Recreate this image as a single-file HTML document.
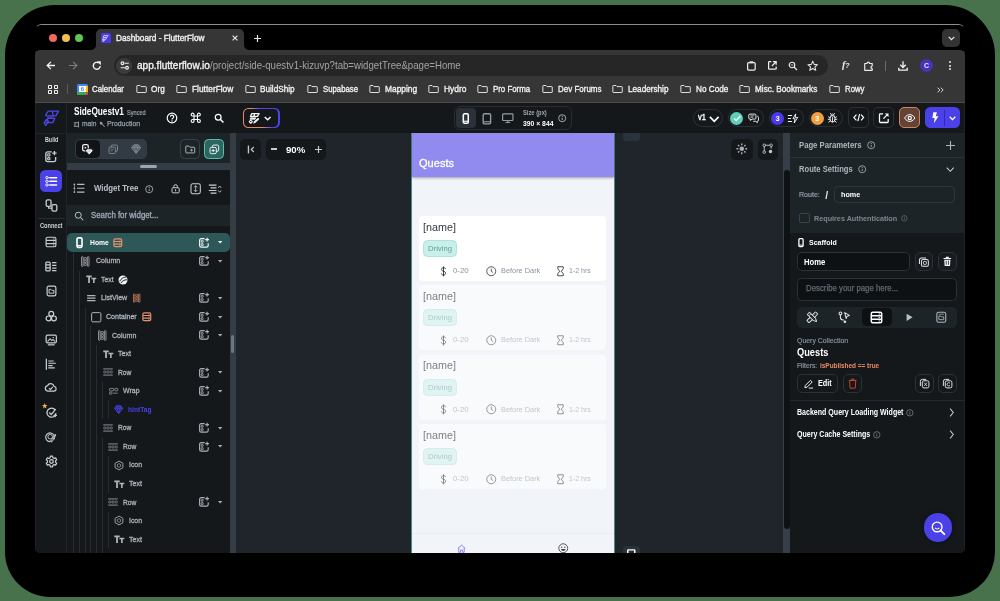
<!DOCTYPE html>
<html><head><meta charset="utf-8"><title>Dashboard - FlutterFlow</title>
<style>
html,body{margin:0;padding:0;background:#48724c}
body{width:1000px;height:601px;overflow:hidden;background:#48724c;position:relative;font-family:"Liberation Sans",sans-serif;}
#sh{position:absolute;left:5px;top:5px;width:990px;height:591.8px;border-radius:50px 50px 45px 45px;background:#000}
#win{position:absolute;left:35.2px;top:24px;width:929.6px;height:529.4px;border-radius:6px 6px 5px 5px;overflow:hidden;background:#14181b}
#pg{position:absolute;left:-35.2px;top:-24px;width:1000px;height:601px;will-change:transform}
.t{position:absolute;white-space:nowrap;transform-origin:0 50%;display:block}
.b{position:absolute;box-sizing:border-box}
.s{position:absolute;overflow:visible}
</style></head><body>
<div id="sh"></div>
<div id="win"><div id="pg">
<div class="b" style="left:35.00px;top:24.00px;width:930.00px;height:26.50px;background:#000;"></div>
<div class="b" style="left:35.20px;top:50.00px;width:929.60px;height:52.00px;background:#363636;border-radius:5px 5px 0 0;"></div>
<div class="b" style="left:96.00px;top:29.00px;width:148.30px;height:23.00px;background:#363636;border-radius:5px 5px 0 0;"></div>
<svg class="s" style="left:91px;top:45px" width="5" height="5"><path d="M5 0 V5 H0 A5 5 0 0 0 5 0Z" fill="#363636"/></svg>
<svg class="s" style="left:244.3px;top:45px" width="5" height="5"><path d="M0 0 V5 H5 A5 5 0 0 1 0 0Z" fill="#363636"/></svg>
<div class="b" style="left:35.2px;top:24.2px;width:929.6px;height:14px;box-sizing:border-box;border-top:1px solid #8c8c8c;border-left:1px solid transparent;border-right:1px solid transparent;border-radius:6px 6px 0 0"></div>
<div class="b" style="left:49.35px;top:33.95px;width:8.10px;height:8.10px;background:#ed6a5e;border-radius:5px;"></div>
<div class="b" style="left:62.35px;top:33.95px;width:8.10px;height:8.10px;background:#f4be4f;border-radius:5px;"></div>
<div class="b" style="left:75.15px;top:33.95px;width:8.10px;height:8.10px;background:#61c554;border-radius:5px;"></div>
<div class="b" style="left:100.50px;top:33.00px;width:10.20px;height:10.20px;background:#4b39ef;border-radius:1.5px;"></div>
<svg class="s" style="left:101.40px;top:33.60px;" width="8.6" height="8.6" viewBox="0 0 24 24"><path d="M8 4 H20 L17 9 H6 Z M6 10.5 H16 L13 15.5 H4.5 Z M4.5 17 H10 L6.5 21.5 Z" fill="none" stroke="#ece9ff" stroke-width="2"/></svg>
<span class="t" style="left:116.00px;top:33.04px;font-size:8.6px;line-height:10.32px;color:#f1f1f1;transform:scaleX(0.9594);-webkit-text-stroke:.35px #f1f1f1;">Dashboard - FlutterFlow</span>
<svg class="s" style="left:231.50px;top:35.00px;" width="6" height="6" viewBox="0 0 10 10"><path d="M1 1 L9 9 M9 1 L1 9" stroke="#e8e8e8" stroke-width="1.9" fill="none"/></svg>
<svg class="s" style="left:254.10px;top:34.50px;" width="7" height="7" viewBox="0 0 10 10"><path d="M5 0 V10 M0 5 H10" stroke="#e8e8e8" stroke-width="1.7" fill="none"/></svg>
<div class="b" style="left:942.00px;top:28.60px;width:18.00px;height:18.40px;background:#333;border-radius:5px;"></div>
<svg class="s" style="left:947.50px;top:35.70px;" width="7" height="4.6" viewBox="0 0 10 6"><path d="M1 1 L5 5 L9 1" stroke="#e8e8e8" stroke-width="1.8" fill="none"/></svg>
<svg class="s" style="left:45.90px;top:61.20px;" width="9" height="9" viewBox="0 0 20 20"><path d="M11 2 L2.6 10 L11 18 M3 10 H20" stroke="#f2f2f2" stroke-width="2.9" fill="none"/></svg>
<svg class="s" style="left:68.50px;top:61.20px;" width="9" height="9" viewBox="0 0 20 20"><path d="M9 2 L17.4 10 L9 18 M17 10 H0" stroke="#7d7d7d" stroke-width="2.7" fill="none"/></svg>
<svg class="s" style="left:91.85px;top:60.75px;" width="9.5" height="9.5" viewBox="0 0 20 20"><path d="M17.3 10.5 A7.3 7.3 0 1 1 14.3 4.2" stroke="#f2f2f2" stroke-width="2.9" fill="none"/><path d="M10.5 0.6 H18.6 V8.8 Z" fill="#f2f2f2"/></svg>
<div class="b" style="left:114.00px;top:55.20px;width:713.50px;height:20.60px;background:#262626;border-radius:11px;"></div>
<div class="b" style="left:116.20px;top:57.70px;width:16.20px;height:16.20px;background:#3b3b3b;border-radius:9px;"></div>
<svg class="s" style="left:119.55px;top:61.30px;" width="9.5" height="9" viewBox="0 0 20 20"><path d="M9.5 5 H19 M1 15 H10.5" stroke="#ececec" stroke-width="2.7" fill="none"/><circle cx="5" cy="5" r="3" stroke="#ececec" stroke-width="2.7" fill="none"/><circle cx="15" cy="15" r="3" stroke="#ececec" stroke-width="2.7" fill="none"/></svg>
<span class="t" style="left:137.40px;top:59.24px;font-size:10.6px;line-height:12.72px;color:#f3f3f3;transform:scaleX(0.9504);-webkit-text-stroke:.35px #f3f3f3;">app.flutterflow.io</span>
<span class="t" style="left:210.20px;top:59.24px;font-size:10.6px;line-height:12.72px;color:#a3a3a3;transform:scaleX(0.9108);">/project/side-questv1-kizuvp?tab=widgetTree&amp;page=Home</span>
<svg class="s" style="left:745.60px;top:59.75px;" width="10.8" height="11.5" viewBox="0 0 20 20"><rect x="3" y="4" width="14" height="14" rx="2" stroke="#ebebeb" stroke-width="2.3" fill="none"/><rect x="6.5" y="1.5" width="7" height="4" rx="1" fill="#e4e4e4"/></svg>
<svg class="s" style="left:766.60px;top:60.10px;" width="10.8" height="10.8" viewBox="0 0 20 20"><path d="M8 3 H4 a1 1 0 0 0 -1 1 V16 a1 1 0 0 0 1 1 H16 a1 1 0 0 0 1 -1 V12" stroke="#ebebeb" stroke-width="2.3" fill="none"/><path d="M11 3 H17 V9 M17 3 L9 11" stroke="#ebebeb" stroke-width="2.3" fill="none"/></svg>
<svg class="s" style="left:787.50px;top:60.70px;" width="10" height="10" viewBox="0 0 20 20"><circle cx="8" cy="8" r="5.5" stroke="#ebebeb" stroke-width="2.3" fill="none"/><path d="M12 12 L18 18" stroke="#e4e4e4" stroke-width="2.4"/><path d="M5.5 8 H10.5" stroke="#e4e4e4" stroke-width="1.6"/></svg>
<svg class="s" style="left:807.35px;top:59.55px;" width="11.5" height="11.5" viewBox="0 0 20 20"><path d="M10 2 L12.4 7.6 L18.4 8.1 L13.8 12 L15.2 17.9 L10 14.7 L4.8 17.9 L6.2 12 L1.6 8.1 L7.6 7.6 Z" stroke="#e4e4e4" stroke-width="1.8" fill="none" stroke-linejoin="round"/></svg>
<span class="t" style="left:842.00px;top:59.00px;font-size:10.5px;line-height:12.60px;color:#eaeaea;font-weight:700;font-style:italic;font-family:'Liberation Serif',serif;">f</span>
<span class="t" style="left:845.30px;top:62.10px;font-size:7px;line-height:8.40px;color:#eaeaea;font-weight:700;font-style:italic;">?</span>
<svg class="s" style="left:862.95px;top:59.75px;" width="11.5" height="11.5" viewBox="0 0 20 20"><path d="M3 6 H7 a2.2 2.2 0 1 1 4.4 0 H16 V10.5 a2.2 2.2 0 1 0 0 4.4 V18 H3 Z" stroke="#ececec" stroke-width="2" fill="none" stroke-linejoin="round"/></svg>
<div class="b" style="left:885.00px;top:61.00px;width:1.00px;height:9.50px;background:#6b6b6b;"></div>
<svg class="s" style="left:897.30px;top:59.50px;" width="12" height="12" viewBox="0 0 20 20"><path d="M10 2 V12 M5.5 8 L10 12.5 L14.5 8" stroke="#f0f0f0" stroke-width="2.2" fill="none"/><path d="M3 13 V17 H17 V13" stroke="#f0f0f0" stroke-width="2.2" fill="none"/></svg>
<div class="b" style="left:919.50px;top:58.80px;width:13.70px;height:13.70px;background:#4634b5;border-radius:7px;"></div>
<span class="t" style="left:923.90px;top:61.60px;font-size:7px;line-height:8.40px;color:#e8e6ff;font-weight:700;">C</span>
<div class="b" style="left:948.50px;top:60.90px;width:2.10px;height:2.00px;background:#ececec;border-radius:1px;"></div>
<div class="b" style="left:948.50px;top:64.50px;width:2.10px;height:2.00px;background:#ececec;border-radius:1px;"></div>
<div class="b" style="left:948.50px;top:68.10px;width:2.10px;height:2.00px;background:#ececec;border-radius:1px;"></div>
<div class="b" style="left:48.00px;top:84.50px;width:4.30px;height:4.30px;border:1.1px solid #f0f0f0;border-radius:0.8px;"></div>
<div class="b" style="left:48.00px;top:89.90px;width:4.30px;height:4.30px;border:1.1px solid #f0f0f0;border-radius:0.8px;"></div>
<div class="b" style="left:53.80px;top:84.50px;width:4.30px;height:4.30px;border:1.1px solid #f0f0f0;border-radius:0.8px;"></div>
<div class="b" style="left:53.80px;top:89.90px;width:4.30px;height:4.30px;border:1.1px solid #f0f0f0;border-radius:0.8px;"></div>
<div class="b" style="left:67.00px;top:84.20px;width:1.00px;height:10.20px;background:#5a5a5a;"></div>
<div class="b" style="left:77.30px;top:84.20px;width:10.30px;height:10.40px;background:#4285f4;border-radius:1.5px;"></div>
<div class="b" style="left:79.30px;top:86.20px;width:6.30px;height:6.40px;background:#fff;"></div>
<div class="b" style="left:77.30px;top:92.40px;width:8.30px;height:2.20px;background:#34a853;border-radius:0 0 0 1.5px;"></div>
<div class="b" style="left:85.60px;top:86.20px;width:2.00px;height:6.40px;background:#fbbc04;"></div>
<div class="b" style="left:85.60px;top:92.40px;width:2.00px;height:2.20px;background:#ea4335;border-radius:0 0 1.5px 0;"></div>
<span class="t" style="left:80.80px;top:85.90px;font-size:6px;line-height:7.20px;color:#4285f4;font-weight:700;">6</span>
<span class="t" style="left:91.70px;top:84.02px;font-size:9.3px;line-height:11.16px;color:#f2f2f2;transform:scaleX(0.8452);-webkit-text-stroke:.35px #f2f2f2;">Calendar</span>
<span class="t" style="left:151.30px;top:84.02px;font-size:9.3px;line-height:11.16px;color:#f2f2f2;transform:scaleX(0.8837);-webkit-text-stroke:.35px #f2f2f2;">Org</span>
<svg class="s" style="left:135.60px;top:85.20px;" width="11" height="8" viewBox="0 0 21 16"><path d="M1.2 2 a1 1 0 0 1 1 -1 H7.5 L9.5 3.2 H19 a1 1 0 0 1 1 1 V14 a1 1 0 0 1 -1 1 H2.2 a1 1 0 0 1 -1 -1 Z" stroke="#e9e9e9" stroke-width="1.9" fill="none" stroke-linejoin="round"/></svg>
<span class="t" style="left:192.00px;top:84.02px;font-size:9.3px;line-height:11.16px;color:#f2f2f2;transform:scaleX(0.8980);-webkit-text-stroke:.35px #f2f2f2;">FlutterFlow</span>
<svg class="s" style="left:176.10px;top:85.20px;" width="11" height="8" viewBox="0 0 21 16"><path d="M1.2 2 a1 1 0 0 1 1 -1 H7.5 L9.5 3.2 H19 a1 1 0 0 1 1 1 V14 a1 1 0 0 1 -1 1 H2.2 a1 1 0 0 1 -1 -1 Z" stroke="#e9e9e9" stroke-width="1.9" fill="none" stroke-linejoin="round"/></svg>
<span class="t" style="left:260.30px;top:84.02px;font-size:9.3px;line-height:11.16px;color:#f2f2f2;transform:scaleX(0.8831);-webkit-text-stroke:.35px #f2f2f2;">BuildShip</span>
<svg class="s" style="left:244.50px;top:85.20px;" width="11" height="8" viewBox="0 0 21 16"><path d="M1.2 2 a1 1 0 0 1 1 -1 H7.5 L9.5 3.2 H19 a1 1 0 0 1 1 1 V14 a1 1 0 0 1 -1 1 H2.2 a1 1 0 0 1 -1 -1 Z" stroke="#e9e9e9" stroke-width="1.9" fill="none" stroke-linejoin="round"/></svg>
<span class="t" style="left:323.00px;top:84.02px;font-size:9.3px;line-height:11.16px;color:#f2f2f2;transform:scaleX(0.8356);-webkit-text-stroke:.35px #f2f2f2;">Supabase</span>
<svg class="s" style="left:307.10px;top:85.20px;" width="11" height="8" viewBox="0 0 21 16"><path d="M1.2 2 a1 1 0 0 1 1 -1 H7.5 L9.5 3.2 H19 a1 1 0 0 1 1 1 V14 a1 1 0 0 1 -1 1 H2.2 a1 1 0 0 1 -1 -1 Z" stroke="#e9e9e9" stroke-width="1.9" fill="none" stroke-linejoin="round"/></svg>
<span class="t" style="left:385.30px;top:84.02px;font-size:9.3px;line-height:11.16px;color:#f2f2f2;transform:scaleX(0.9026);-webkit-text-stroke:.35px #f2f2f2;">Mapping</span>
<svg class="s" style="left:369.30px;top:85.20px;" width="11" height="8" viewBox="0 0 21 16"><path d="M1.2 2 a1 1 0 0 1 1 -1 H7.5 L9.5 3.2 H19 a1 1 0 0 1 1 1 V14 a1 1 0 0 1 -1 1 H2.2 a1 1 0 0 1 -1 -1 Z" stroke="#e9e9e9" stroke-width="1.9" fill="none" stroke-linejoin="round"/></svg>
<span class="t" style="left:444.00px;top:84.02px;font-size:9.3px;line-height:11.16px;color:#f2f2f2;transform:scaleX(0.9070);-webkit-text-stroke:.35px #f2f2f2;">Hydro</span>
<svg class="s" style="left:428.10px;top:85.20px;" width="11" height="8" viewBox="0 0 21 16"><path d="M1.2 2 a1 1 0 0 1 1 -1 H7.5 L9.5 3.2 H19 a1 1 0 0 1 1 1 V14 a1 1 0 0 1 -1 1 H2.2 a1 1 0 0 1 -1 -1 Z" stroke="#e9e9e9" stroke-width="1.9" fill="none" stroke-linejoin="round"/></svg>
<span class="t" style="left:493.20px;top:84.02px;font-size:9.3px;line-height:11.16px;color:#f2f2f2;transform:scaleX(0.8446);-webkit-text-stroke:.35px #f2f2f2;">Pro Forma</span>
<svg class="s" style="left:477.30px;top:85.20px;" width="11" height="8" viewBox="0 0 21 16"><path d="M1.2 2 a1 1 0 0 1 1 -1 H7.5 L9.5 3.2 H19 a1 1 0 0 1 1 1 V14 a1 1 0 0 1 -1 1 H2.2 a1 1 0 0 1 -1 -1 Z" stroke="#e9e9e9" stroke-width="1.9" fill="none" stroke-linejoin="round"/></svg>
<span class="t" style="left:557.50px;top:84.02px;font-size:9.3px;line-height:11.16px;color:#f2f2f2;transform:scaleX(0.8590);-webkit-text-stroke:.35px #f2f2f2;">Dev Forums</span>
<svg class="s" style="left:541.60px;top:85.20px;" width="11" height="8" viewBox="0 0 21 16"><path d="M1.2 2 a1 1 0 0 1 1 -1 H7.5 L9.5 3.2 H19 a1 1 0 0 1 1 1 V14 a1 1 0 0 1 -1 1 H2.2 a1 1 0 0 1 -1 -1 Z" stroke="#e9e9e9" stroke-width="1.9" fill="none" stroke-linejoin="round"/></svg>
<span class="t" style="left:628.00px;top:84.02px;font-size:9.3px;line-height:11.16px;color:#f2f2f2;transform:scaleX(0.8801);-webkit-text-stroke:.35px #f2f2f2;">Leadership</span>
<svg class="s" style="left:612.10px;top:85.20px;" width="11" height="8" viewBox="0 0 21 16"><path d="M1.2 2 a1 1 0 0 1 1 -1 H7.5 L9.5 3.2 H19 a1 1 0 0 1 1 1 V14 a1 1 0 0 1 -1 1 H2.2 a1 1 0 0 1 -1 -1 Z" stroke="#e9e9e9" stroke-width="1.9" fill="none" stroke-linejoin="round"/></svg>
<span class="t" style="left:695.70px;top:84.02px;font-size:9.3px;line-height:11.16px;color:#f2f2f2;transform:scaleX(0.8800);-webkit-text-stroke:.35px #f2f2f2;">No Code</span>
<svg class="s" style="left:679.80px;top:85.20px;" width="11" height="8" viewBox="0 0 21 16"><path d="M1.2 2 a1 1 0 0 1 1 -1 H7.5 L9.5 3.2 H19 a1 1 0 0 1 1 1 V14 a1 1 0 0 1 -1 1 H2.2 a1 1 0 0 1 -1 -1 Z" stroke="#e9e9e9" stroke-width="1.9" fill="none" stroke-linejoin="round"/></svg>
<span class="t" style="left:755.00px;top:84.02px;font-size:9.3px;line-height:11.16px;color:#f2f2f2;transform:scaleX(0.8800);-webkit-text-stroke:.35px #f2f2f2;">Misc. Bookmarks</span>
<svg class="s" style="left:739.10px;top:85.20px;" width="11" height="8" viewBox="0 0 21 16"><path d="M1.2 2 a1 1 0 0 1 1 -1 H7.5 L9.5 3.2 H19 a1 1 0 0 1 1 1 V14 a1 1 0 0 1 -1 1 H2.2 a1 1 0 0 1 -1 -1 Z" stroke="#e9e9e9" stroke-width="1.9" fill="none" stroke-linejoin="round"/></svg>
<span class="t" style="left:844.80px;top:84.02px;font-size:9.3px;line-height:11.16px;color:#f2f2f2;transform:scaleX(0.8385);-webkit-text-stroke:.35px #f2f2f2;">Rowy</span>
<svg class="s" style="left:828.80px;top:85.20px;" width="11" height="8" viewBox="0 0 21 16"><path d="M1.2 2 a1 1 0 0 1 1 -1 H7.5 L9.5 3.2 H19 a1 1 0 0 1 1 1 V14 a1 1 0 0 1 -1 1 H2.2 a1 1 0 0 1 -1 -1 Z" stroke="#e9e9e9" stroke-width="1.9" fill="none" stroke-linejoin="round"/></svg>
<svg class="s" style="left:937.00px;top:86.50px;" width="7" height="6" viewBox="0 0 12 10"><path d="M1 1 L5 5 L1 9 M6.5 1 L10.5 5 L6.5 9" stroke="#ececec" stroke-width="1.5" fill="none"/></svg>
<div class="b" style="left:35.00px;top:101.60px;width:930.00px;height:1.20px;background:#4c4c4c;"></div>
<div class="b" style="left:35.00px;top:102.80px;width:930.00px;height:451.20px;background:#14181b;"></div>
<div class="b" style="left:35.20px;top:102.80px;width:1.10px;height:451.20px;background:#1e2125;"></div>
<div class="b" style="left:963.70px;top:102.80px;width:1.10px;height:451.20px;background:#1e2125;"></div>
<div class="b" style="left:66.30px;top:102.80px;width:0.70px;height:450.20px;background:#1f252a;"></div>
<div class="b" style="left:36.00px;top:132.80px;width:31.00px;height:0.70px;background:#1f252a;"></div>
<svg class="s" style="left:38px;top:104px" width="30" height="30" viewBox="0 0 30 30"><path d="M10.2 7.1 H20.6 L17.8 11.9 H8.1 L7.6 11.2 Z M14.2 7.1 L15.2 11.9" fill="none" stroke="#4b45e6" stroke-width="1.35" stroke-linejoin="round"/><path d="M9.4 12.3 H15.8 V13.7 H9.4 Z" fill="#3f39c8"/><path d="M9.8 14.3 H16.9 L14.7 18.6 H11 L9.2 16.2 Z" fill="none" stroke="#4b45e6" stroke-width="1.35" stroke-linejoin="round"/><path d="M8.4 15.4 L10.7 17.7 L7.7 21.5 L6.1 18.9 Z M7 18 L9.4 18.6" fill="none" stroke="#4b45e6" stroke-width="1.25" stroke-linejoin="round"/></svg>
<span class="t" style="left:74.00px;top:106.28px;font-size:10.2px;line-height:12.24px;color:#fff;font-weight:700;transform:scaleX(0.8092);">SideQuestv1</span>
<span class="t" style="left:127.30px;top:109.34px;font-size:6.6px;line-height:7.92px;color:#95a1ac;transform:scaleX(0.8495);-webkit-text-stroke:.2px #95a1ac;">Synced</span>
<svg class="s" style="left:73.45px;top:120.50px;" width="7.5" height="7" viewBox="0 0 12 12"><path d="M1 3 H9 M1 9 H9 M9 1 V11 M3 3 V9" stroke="#95a1ac" stroke-width="1.6" fill="none"/></svg>
<span class="t" style="left:82.30px;top:119.32px;font-size:7.8px;line-height:9.36px;color:#95a1ac;transform:scaleX(0.8517);-webkit-text-stroke:.25px #95a1ac;">main</span>
<svg class="s" style="left:98.55px;top:120.95px;" width="6.5" height="6.5" viewBox="0 0 12 12"><path d="M2 2 a3 3 0 0 1 4.5 3.5 L11 10 L9.5 11 L5.5 6.6 A3 3 0 0 1 2 2Z" fill="#95a1ac"/></svg>
<span class="t" style="left:106.70px;top:119.32px;font-size:7.8px;line-height:9.36px;color:#95a1ac;transform:scaleX(0.8876);-webkit-text-stroke:.25px #95a1ac;">Production</span>
<svg class="s" style="left:166.00px;top:112.00px;" width="12" height="12" viewBox="0 0 20 20"><circle cx="10" cy="10" r="8" stroke="#fff" stroke-width="2" fill="none"/><path d="M7.4 8 a2.7 2.7 0 1 1 3.9 2.4 c-.9.5-1.3 1-1.3 2" stroke="#fff" stroke-width="2" fill="none"/><circle cx="10" cy="14.8" r="1.2" fill="#fff"/></svg>
<svg class="s" style="left:190.05px;top:112.25px;" width="11.5" height="11.5" viewBox="0 0 20 20"><path d="M7 7 H13 V13 H7 Z M7 7 V4.5 A2.5 2.5 0 1 0 4.5 7 H7 M13 7 V4.5 A2.5 2.5 0 1 1 15.5 7 H13 M7 13 V15.5 A2.5 2.5 0 1 1 4.5 13 H7 M13 13 V15.5 A2.5 2.5 0 1 0 15.5 13 H13" stroke="#fff" stroke-width="2" fill="none"/></svg>
<svg class="s" style="left:213.95px;top:113.15px;" width="10.5" height="10.5" viewBox="0 0 20 20"><circle cx="8" cy="8" r="5.5" stroke="#fff" stroke-width="2.4" fill="none"/><path d="M12 12 L18 18" stroke="#fff" stroke-width="2.8"/></svg>
<div class="b" style="left:242.6px;top:107.9px;width:37.1px;height:20.1px;border-radius:5.5px;background:linear-gradient(59deg,#e8895f 0%,#e8895f 40%,#8f66c9 50%,#4a45ea 60%,#4a45ea 100%);"></div>
<div class="b" style="left:243.80px;top:109.10px;width:34.70px;height:17.70px;background:#14181b;border-radius:4.4px;"></div>
<svg class="s" style="left:248.00px;top:111.90px;" width="12.2" height="12.2" viewBox="0 0 20 20"><path d="M6.2 2.6 H18.2 L15.6 7.2 H4 Z M11 2.6 L9.4 7.2" fill="none" stroke="#f4f4f4" stroke-width="2.1" stroke-linejoin="round"/><path d="M4.2 9.6 H12.8 L11.6 12 H3.4 Z" fill="#f4f4f4" stroke="#f4f4f4" stroke-width="1.2" stroke-linejoin="round"/><path d="M4.6 13.4 L7.2 15.8 L4.6 18.6 L2 15.8 Z" fill="none" stroke="#f4f4f4" stroke-width="1.8" stroke-linejoin="round"/><path d="M10.6 16.8 L16.6 11.4" stroke="#f4f4f4" stroke-width="3.2" stroke-linecap="round"/><path d="M9.6 18.2 L11.2 16.4" stroke="#f4f4f4" stroke-width="1.6" stroke-linecap="round"/></svg>
<svg class="s" style="left:263.85px;top:115.50px;" width="7.3" height="4.8" viewBox="0 0 10 6"><path d="M1 1 L5 5 L9 1" stroke="#fff" stroke-width="1.9" fill="none"/></svg>
<div class="b" style="left:453.70px;top:105.60px;width:118.80px;height:24.40px;border:1px solid #272d33;border-radius:6px;"></div>
<div class="b" style="left:455.50px;top:108.00px;width:20.80px;height:20.00px;background:#2a3138;border-radius:4px;"></div>
<svg class="s" style="left:462.10px;top:112.70px;" width="7.6" height="11" viewBox="0 0 12 20"><rect x="1.5" y="1.5" width="9" height="17" rx="2.2" stroke="#fff" stroke-width="2.8" fill="none"/><path d="M2 15 H10" stroke="#fff" stroke-width="2"/></svg>
<svg class="s" style="left:481.90px;top:112.70px;" width="9.8" height="11.6" viewBox="0 0 14 18"><rect x="1.2" y="1.2" width="11.6" height="15.6" rx="2.2" stroke="#939da7" stroke-width="2.1" fill="none"/><path d="M2 13.6 H12" stroke="#939da7" stroke-width="1.7"/></svg>
<svg class="s" style="left:501.70px;top:113.20px;" width="11.6" height="10.4" viewBox="0 0 20 17"><rect x="1.1" y="1.1" width="17.8" height="11.4" rx="1.3" stroke="#939da7" stroke-width="2" fill="none"/><path d="M6 16 H14 M10 12.5 V16" stroke="#939da7" stroke-width="1.8"/></svg>
<span class="t" style="left:522.50px;top:109.42px;font-size:6.3px;line-height:7.56px;color:#9ca6b0;font-weight:700;transform:scaleX(0.9188);">Size (px)</span>
<span class="t" style="left:522.50px;top:118.84px;font-size:7.6px;line-height:9.12px;color:#fff;font-weight:700;transform:scaleX(0.8965);">390 × 844</span>
<svg class="s" style="left:558.40px;top:113.80px;" width="8.4" height="8.4" viewBox="0 0 20 20"><circle cx="10" cy="10" r="8.4" stroke="#c3c9cf" stroke-width="1.9" fill="none"/><path d="M10 9 V14.5" stroke="#c3c9cf" stroke-width="2"/><circle cx="10" cy="6" r="1.3" fill="#c3c9cf"/></svg>
<div class="b" style="left:693.00px;top:108.70px;width:30.00px;height:18.50px;border:1px solid #2a3037;border-radius:10px;"></div>
<span class="t" style="left:697.60px;top:112.40px;font-size:9px;line-height:10.80px;color:#fff;transform:scaleX(0.8311);-webkit-text-stroke:.35px #fff;">v1</span>
<svg class="s" style="left:709.05px;top:115.50px;" width="10.5" height="6.2" viewBox="0 0 12 7"><path d="M1 1 L6 6 L11 1" stroke="#fff" stroke-width="1.9" fill="none"/></svg>
<div class="b" style="left:727.60px;top:108.70px;width:36.20px;height:18.50px;border:1px solid #2a3037;border-radius:10px;"></div>
<div class="b" style="left:730.20px;top:111.50px;width:13.00px;height:13.00px;background:#5fcfba;border-radius:7px;"></div>
<svg class="s" style="left:732.65px;top:114.80px;" width="8.5" height="7" viewBox="0 0 12 10"><path d="M1.5 5 L4.5 8 L10.5 1.5" stroke="#fff" stroke-width="2" fill="none"/></svg>
<svg class="s" style="left:747.65px;top:112.95px;" width="11.5" height="10.5" viewBox="0 0 20 19"><path d="M3 2 H12 a2 2 0 0 1 2 2 V9 a2 2 0 0 1 -2 2 H7 L4 13.5 V11 H3 a2 2 0 0 1 -2 -2 V4 a2 2 0 0 1 2 -2Z" stroke="#fff" stroke-width="1.6" fill="none"/><path d="M16.5 6 a2 2 0 0 1 2 2 V13 a2 2 0 0 1 -2 2 V17.5 L13.5 15 H9" stroke="#fff" stroke-width="1.6" fill="none"/><path d="M4 5.2 H11 M4 7.8 H9" stroke="#fff" stroke-width="1.2"/></svg>
<div class="b" style="left:768.60px;top:108.70px;width:35.20px;height:18.50px;border:1px solid #2a3037;border-radius:10px;"></div>
<div class="b" style="left:771.00px;top:111.50px;width:13.00px;height:13.00px;background:#4b39ef;border-radius:7px;"></div>
<span class="t" style="left:775.40px;top:113.54px;font-size:7.6px;line-height:9.12px;color:#fff;font-weight:700;">3</span>
<svg class="s" style="left:787.20px;top:112.80px;" width="12" height="10.8" viewBox="0 0 19 18"><path d="M1 4 H8 M1 9 H6 M1 14 H8" stroke="#fff" stroke-width="1.7" fill="none"/><path d="M14 1.5 L9.5 9.5 H13 L11.5 16.5 L17.5 7.5 H13.5 Z" stroke="#fff" stroke-width="1.5" fill="none" stroke-linejoin="round"/></svg>
<div class="b" style="left:808.60px;top:108.70px;width:34.60px;height:18.50px;border:1px solid #2a3037;border-radius:10px;"></div>
<div class="b" style="left:810.50px;top:111.50px;width:13.00px;height:13.00px;background:#f2a03d;border-radius:7px;"></div>
<span class="t" style="left:814.90px;top:113.54px;font-size:7.6px;line-height:9.12px;color:#fff;font-weight:700;">3</span>
<svg class="s" style="left:827.00px;top:112.20px;" width="11" height="12" viewBox="0 0 20 21"><ellipse cx="10" cy="12" rx="4.6" ry="6" stroke="#fff" stroke-width="1.8" fill="none"/><path d="M7 6.5 a3 3 0 0 1 6 0 M10 8 V18 M5.4 10 L2 8 M5.4 13 H1.5 M5.6 16 L2.5 18.5 M14.6 10 L18 8 M14.6 13 H18.5 M14.4 16 L17.5 18.5 M7.5 3.8 L6 1.5 M12.5 3.8 L14 1.5" stroke="#fff" stroke-width="1.5" fill="none"/></svg>
<div class="b" style="left:848.00px;top:107.30px;width:20.80px;height:21.20px;border:1px solid #2a3037;border-radius:5px;"></div>
<svg class="s" style="left:852.65px;top:113.40px;" width="11.5" height="9.2" viewBox="0 0 20 14"><path d="M6 2 L1.5 7 L6 12 M14 2 L18.5 7 L14 12 M11.5 1 L8.5 13" stroke="#fff" stroke-width="2" fill="none"/></svg>
<div class="b" style="left:873.00px;top:107.30px;width:21.20px;height:21.20px;border:1px solid #2a3037;border-radius:5px;"></div>
<svg class="s" style="left:877.80px;top:112.00px;" width="12" height="12" viewBox="0 0 20 20"><path d="M8.5 3 H4 a1.5 1.5 0 0 0 -1.5 1.5 V16 a1.5 1.5 0 0 0 1.5 1.5 H15.5 a1.5 1.5 0 0 0 1.5 -1.5 V11.5" stroke="#fff" stroke-width="2.1" fill="none"/><path d="M11.5 2.5 H17.5 V8.5 Z" fill="#fff"/><path d="M16 4 L9 11" stroke="#fff" stroke-width="2.2"/></svg>
<div class="b" style="left:898.70px;top:107.30px;width:21.30px;height:21.20px;background:#634335;border:1.6px solid #cf835f;border-radius:5px;"></div>
<svg class="s" style="left:903.55px;top:114.00px;" width="11.5" height="8" viewBox="0 0 20 14"><path d="M1 7 C4 2 8 1 10 1 S16 2 19 7 C16 12 12 13 10 13 S4 12 1 7Z" stroke="#fff" stroke-width="1.7" fill="none"/><circle cx="10" cy="7" r="2.8" stroke="#fff" stroke-width="2" fill="none"/></svg>
<div class="b" style="left:924.50px;top:107.30px;width:35.10px;height:21.20px;background:#4a41e8;border-radius:5.5px;"></div>
<div class="b" style="left:944.20px;top:109.50px;width:0.70px;height:16.80px;background:#3425c2;"></div>
<svg class="s" style="left:931.05px;top:112.25px;" width="8.5" height="11.5" viewBox="0 0 12 18"><path d="M8.5 0.5 H3 L1.5 9.5 H5 L4 17.5 L11 6.5 H7 Z" fill="#fff"/></svg>
<svg class="s" style="left:948.50px;top:116.40px;" width="7" height="4.4" viewBox="0 0 10 6"><path d="M1 1 L5 5 L9 1" stroke="#fff" stroke-width="1.8" fill="none"/></svg>
<span class="t" style="left:44.60px;top:136.16px;font-size:6.4px;line-height:7.68px;color:#cfd4d9;font-weight:700;transform:scaleX(0.8377);">Build</span>
<svg class="s" style="left:44.45px;top:150.25px;" width="13.5" height="13.5" viewBox="0 0 22 22"><path d="M12.5 3 H6 a3 3 0 0 0 -3 3 V16 a3 3 0 0 0 3 3 H16 a3 3 0 0 0 3 -3 V11.5" stroke="#c6cdd4" stroke-width="2.18" fill="none"/><rect x="6" y="6.2" width="3.6" height="3.6" rx=".8" stroke="#c6cdd4" stroke-width="1.72" fill="none"/><rect x="6" y="12.4" width="3.6" height="3.6" rx=".8" stroke="#c6cdd4" stroke-width="1.72" fill="none"/><path d="M17 1.5 V8.5 M13.5 5 H20.5" stroke="#c6cdd4" stroke-width="2.18"/></svg>
<div class="b" style="left:39.80px;top:169.80px;width:22.50px;height:22.60px;background:#4a41e8;border-radius:5.5px;"></div>
<svg class="s" style="left:45.00px;top:175.80px;" width="12.6" height="10.6" viewBox="0 0 21 18"><path d="M8.5 2.8 H19.5 M8.5 9 H19.5 M8.5 15.2 H19.5" stroke="#fff" stroke-width="2.5" stroke-linecap="round"/><circle cx="3" cy="2.8" r="2" stroke="#fff" stroke-width="1.5" fill="none"/><circle cx="3" cy="9" r="2" stroke="#fff" stroke-width="1.5" fill="none"/><circle cx="3" cy="15.2" r="2" stroke="#fff" stroke-width="1.5" fill="none"/><path d="M5 2.8 H8 M5 9 H8 M5 15.2 H8" stroke="#fff" stroke-width="1.2"/></svg>
<svg class="s" style="left:45.00px;top:198.80px;" width="13" height="13" viewBox="0 0 22 22"><rect x="2" y="1.5" width="8.2" height="11" rx="2.4" stroke="#c6cdd4" stroke-width="2.2" fill="none"/><rect x="11.8" y="9.5" width="8.2" height="11" rx="2.4" stroke="#c6cdd4" stroke-width="2.2" fill="none"/><path d="M6 12.5 V15.4 H11.8" stroke="#c6cdd4" stroke-width="1.8" fill="none"/></svg>
<div class="b" style="left:38.00px;top:218.30px;width:27.00px;height:0.70px;background:#262c32;"></div>
<span class="t" style="left:40.00px;top:221.76px;font-size:6.4px;line-height:7.68px;color:#cfd4d9;font-weight:700;transform:scaleX(0.8789);">Connect</span>
<svg class="s" style="left:45.30px;top:236.30px;" width="12" height="12" viewBox="0 0 22 22"><rect x="2" y="2.2" width="18" height="17.6" rx="3" stroke="#c6cdd4" stroke-width="2.1" fill="none"/><path d="M2 8 H20 M2 14 H20" stroke="#c6cdd4" stroke-width="1.9000000000000001"/><path d="M14.5 5.1 H17 M14.5 11 H17 M14.5 16.9 H17" stroke="#c6cdd4" stroke-width="1.5"/></svg>
<svg class="s" style="left:45.30px;top:261.30px;" width="12" height="11" viewBox="0 0 22 20"><rect x="1.5" y="2" width="8" height="16" rx="1.8" stroke="#c6cdd4" stroke-width="2.18" fill="none"/><path d="M1.5 7 H9.5 M1.5 12.5 H9.5 M13 3 H21 M13 8 H21 M13 13 H21 M13 17.5 H21" stroke="#c6cdd4" stroke-width="2.07"/></svg>
<svg class="s" style="left:45.80px;top:284.80px;" width="11" height="12" viewBox="0 0 20 22"><rect x="2" y="2" width="16" height="18" rx="3" stroke="#c6cdd4" stroke-width="2.18" fill="none"/><path d="M5.5 8 H9 L10.5 9.8 H14.5 V15 H5.5 Z" stroke="#c6cdd4" stroke-width="1.72" fill="none"/></svg>
<svg class="s" style="left:45.05px;top:309.80px;" width="12.5" height="12" viewBox="0 0 22 21"><circle cx="11" cy="6.5" r="4.3" stroke="#c6cdd4" stroke-width="2.18" fill="none"/><circle cx="6.3" cy="14.8" r="4.3" stroke="#c6cdd4" stroke-width="2.18" fill="none"/><circle cx="15.7" cy="14.8" r="4.3" stroke="#c6cdd4" stroke-width="2.18" fill="none"/></svg>
<svg class="s" style="left:45.05px;top:333.80px;" width="12.5" height="12" viewBox="0 0 22 21"><rect x="2" y="2" width="18" height="13.5" rx="2.5" stroke="#c6cdd4" stroke-width="2.18" fill="none"/><path d="M4.5 13 L9 8.5 L12 11.5 L14 9.5 L17.5 13" stroke="#c6cdd4" stroke-width="1.84" fill="none"/><circle cx="14.5" cy="6.3" r="1.3" fill="#c6cdd4"/><path d="M5 19 H17" stroke="#c6cdd4" stroke-width="2.18"/></svg>
<svg class="s" style="left:45.30px;top:357.55px;" width="12" height="12.5" viewBox="0 0 22 22"><path d="M2.5 1 V21" stroke="#c6cdd4" stroke-width="2.30"/><path d="M6 5 H16 M6 9.2 H20 M6 13.4 H14 M6 17.6 H18" stroke="#c6cdd4" stroke-width="2.18"/></svg>
<svg class="s" style="left:44.30px;top:382.35px;" width="14" height="10.5" viewBox="0 0 24 18"><path d="M6.5 15.5 a4.6 4.6 0 0 1 -.5 -9.1 a6 6 0 0 1 11.3 1.2 a4 4 0 0 1 .2 7.9 Z" stroke="#c6cdd4" stroke-width="2.18" fill="none" stroke-linejoin="round"/><path d="M8.5 10.5 L11 13 L15 8.5" stroke="#c6cdd4" stroke-width="1.95" fill="none"/></svg>
<svg class="s" style="left:45.10px;top:405.75px;" width="13" height="12.5" viewBox="0 0 22 22"><path d="M17.5 7 A8 8 0 1 0 19 12.5" stroke="#c6cdd4" stroke-width="2.18" fill="none"/><path d="M7 11.5 L10.5 15 L18.5 5.5" stroke="#c6cdd4" stroke-width="2.18" fill="none"/><path d="M17.5 13.5 V20 M14.3 16.7 H20.7" stroke="#c6cdd4" stroke-width="2.07"/></svg>
<svg class="s" style="left:41.85px;top:402.85px;" width="5.5" height="5.5" viewBox="0 0 10 10"><path d="M5 0 L6.3 3.6 L10 3.8 L7.1 6.1 L8.1 9.8 L5 7.7 L1.9 9.8 L2.9 6.1 L0 3.8 L3.7 3.6 Z" fill="#f5b455"/></svg>
<svg class="s" style="left:45.30px;top:430.75px;" width="12" height="12.5" viewBox="0 0 22 22"><path d="M16.5 14.5 A8 8 0 1 0 8 19 c1.5 0 1.8-1.2 1.2-2.2" stroke="#c6cdd4" stroke-width="2.07" fill="none"/><path d="M11.5 17.5 L18.5 5.5 L20 6.5 L13.5 18.5 L11 20 Z" stroke="#c6cdd4" stroke-width="1.61" fill="none"/><circle cx="9.5" cy="10" r="4.2" stroke="#c6cdd4" stroke-width="1.72" fill="none"/></svg>
<svg class="s" style="left:44.80px;top:455.30px;" width="13" height="13" viewBox="0 0 22 21"><path d="M9.2 1.5 H12.8 L13.4 4.2 L15.4 5.3 L18 4.4 L19.8 7.5 L17.8 9.4 V11.6 L19.8 13.5 L18 16.6 L15.4 15.7 L13.4 16.8 L12.8 19.5 H9.2 L8.6 16.8 L6.6 15.7 L4 16.6 L2.2 13.5 L4.2 11.6 V9.4 L2.2 7.5 L4 4.4 L6.6 5.3 L8.6 4.2 Z" stroke="#c6cdd4" stroke-width="2.07" fill="none" stroke-linejoin="round"/><circle cx="11" cy="10.5" r="3" stroke="#c6cdd4" stroke-width="2.07" fill="none"/></svg>
<div class="b" style="left:67.00px;top:133.00px;width:162.50px;height:30.00px;background:#1d2428;"></div>
<div class="b" style="left:67.00px;top:163.20px;width:162.50px;height:6.80px;background:#343c44;"></div>
<div class="b" style="left:140.00px;top:165.00px;width:17.30px;height:3.10px;background:#9ba6b2;border-radius:2px;"></div>
<div class="b" style="left:74.50px;top:138.80px;width:72.80px;height:20.70px;background:#323a43;border-radius:5px;"></div>
<div class="b" style="left:76.20px;top:140.20px;width:23.60px;height:17.80px;background:#111417;border-radius:4.5px;"></div>
<svg class="s" style="left:82.20px;top:143.80px;" width="11.2" height="11.2" viewBox="0 0 21 21"><rect x="1.2" y="1.2" width="10.6" height="11.6" rx="3" stroke="#f2f2f2" stroke-width="2.3" fill="none"/><path d="M5 4.5 V9.5 L8.6 7Z" fill="#f2f2f2"/><path d="M9.4 9 H17.8 L21 12.8 L13.6 20.6 L6.2 12.8 Z" fill="#f2f2f2" stroke="#111417" stroke-width="1.6"/><path d="M10 13.2 H17.2" stroke="#9a9a9a" stroke-width="1"/></svg>
<svg class="s" style="left:107.65px;top:143.95px;" width="10.5" height="10.5" viewBox="0 0 20 20"><rect x="6" y="2" width="12" height="12" rx="2" stroke="#8a949e" stroke-width="1.6" fill="none"/><rect x="2" y="6" width="12" height="12" rx="2" stroke="#8a949e" stroke-width="1.6" fill="#2b333a"/><path d="M5 10 H11 M5 13 H9" stroke="#8a949e" stroke-width="1.3"/></svg>
<svg class="s" style="left:130.90px;top:143.80px;" width="10.2" height="10.2" viewBox="0 0 22 21.5"><path d="M6 1.5 H16 L20.8 7.6 L11 20 L1.2 7.6 Z" stroke="#8a949e" stroke-width="1.7" fill="#8a949e" fill-opacity=".35" stroke-linejoin="round"/><path d="M1.2 7.6 H20.8 M7.6 7.6 L11 19.5 L14.4 7.6 M6 1.5 L7.6 7.6 L11 1.5 L14.4 7.6 L16 1.5" stroke="#8a949e" stroke-width="1.36" fill="none" stroke-linejoin="round"/></svg>
<div class="b" style="left:180.00px;top:139.20px;width:20.00px;height:19.60px;border:1px solid #39424a;border-radius:4.5px;"></div>
<svg class="s" style="left:184.75px;top:144.50px;" width="10.5" height="9" viewBox="0 0 20 16"><path d="M1.5 2.5 a1 1 0 0 1 1 -1 H7.5 L9.5 3.7 H17.5 a1 1 0 0 1 1 1 V13.5 a1 1 0 0 1 -1 1 H2.5 a1 1 0 0 1 -1 -1 Z" stroke="#b9c1c8" stroke-width="1.7" fill="none"/><path d="M12.5 6.8 V11.8 M10 9.3 H15" stroke="#b9c1c8" stroke-width="1.5"/></svg>
<div class="b" style="left:204.30px;top:139.20px;width:20.00px;height:19.60px;background:#2d6660;border:1.2px solid #58bfae;border-radius:4.5px;"></div>
<svg class="s" style="left:208.80px;top:143.50px;" width="11" height="11" viewBox="0 0 21 21"><rect x="6.5" y="2" width="12" height="12" rx="2.5" stroke="#fff" stroke-width="1.7" fill="none"/><rect x="2" y="6.5" width="12" height="12" rx="2.5" stroke="#fff" stroke-width="1.7" fill="#2d6660"/><path d="M8 9.5 V15.5 M5 12.5 H11" stroke="#fff" stroke-width="1.6"/></svg>
<svg class="s" style="left:73.40px;top:183.45px;" width="12" height="10.5" viewBox="0 0 22 19"><path d="M7.5 2.5 H21 M7.5 9.5 H21 M7.5 16.5 H21" stroke="#b4bcc4" stroke-width="2.1"/><circle cx="2.6" cy="2.5" r="1.6" fill="#b4bcc4"/><circle cx="2.6" cy="9.5" r="1.6" fill="#b4bcc4"/><circle cx="2.6" cy="16.5" r="1.6" fill="#b4bcc4"/><path d="M2.6 2.5 V16.5" stroke="#b4bcc4" stroke-width="1"/></svg>
<span class="t" style="left:93.80px;top:183.44px;font-size:8.6px;line-height:10.32px;color:#b9c0c7;font-weight:700;transform:scaleX(0.9124);">Widget Tree</span>
<svg class="s" style="left:144.50px;top:184.50px;" width="8.4" height="8.4" viewBox="0 0 20 20"><circle cx="10" cy="10" r="8.4" stroke="#b9c0c7" stroke-width="1.9" fill="none"/><path d="M10 9 V14.5" stroke="#b9c0c7" stroke-width="2"/><circle cx="10" cy="6" r="1.3" fill="#b9c0c7"/></svg>
<svg class="s" style="left:171.30px;top:183.05px;" width="9.2" height="11.5" viewBox="0 0 18 20"><rect x="2" y="8" width="14" height="10" rx="1.8" stroke="#c9cfd5" stroke-width="1.9" fill="none"/><path d="M5.5 8 V5.5 a3.5 3.5 0 0 1 7 0 V8" stroke="#c9cfd5" stroke-width="1.9" fill="none"/><rect x="8" y="11" width="2" height="4" fill="#c9cfd5"/></svg>
<svg class="s" style="left:189.95px;top:183.05px;" width="11.3" height="11.5" viewBox="0 0 20 21"><rect x="1.5" y="1.5" width="17" height="18" rx="3" stroke="#c9cfd5" stroke-width="1.9" fill="none"/><path d="M10 5 V16 M7 8 L10 5 L13 8 M7 13 L10 16 L13 13" stroke="#c9cfd5" stroke-width="1.5" fill="none"/></svg>
<svg class="s" style="left:208.00px;top:183.80px;" width="14" height="10" viewBox="0 0 23 17"><path d="M1 2 H14 M4 6.5 H14 M1 11 H14 M4 15.5 H14" stroke="#c9cfd5" stroke-width="1.9"/><path d="M17 6.5 L19.5 3.5 L22 6.5 M17 11 L19.5 14 L22 11" stroke="#c9cfd5" stroke-width="1.5" fill="none"/></svg>
<div class="b" style="left:67.00px;top:205.00px;width:162.50px;height:21.30px;background:#1d2428;"></div>
<svg class="s" style="left:73.90px;top:210.60px;" width="10" height="10" viewBox="0 0 20 20"><circle cx="8.5" cy="8.5" r="6" stroke="#c2c9cf" stroke-width="1.9" fill="none"/><path d="M13 13 L18.5 18.5" stroke="#c2c9cf" stroke-width="2.1"/></svg>
<span class="t" style="left:90.80px;top:210.36px;font-size:8.4px;line-height:10.08px;color:#a2acb5;transform:scaleX(0.9327);-webkit-text-stroke:.3px #a2acb5;">Search for widget...</span>
<div class="b" style="left:229.50px;top:133.00px;width:6.50px;height:420.00px;background:#343c44;"></div>
<div class="b" style="left:231.20px;top:335.00px;width:2.60px;height:17.50px;background:#6a7680;border-radius:1.5px;"></div>
<div class="b" style="left:67.20px;top:232.90px;width:162.80px;height:18.90px;background:#2e5857;border-radius:5px;"></div>
<div class="b" style="left:73.40px;top:252.00px;width:0.80px;height:301.00px;background:#262c32;"></div>
<div class="b" style="left:79.00px;top:270.50px;width:0.80px;height:282.50px;background:#262c32;"></div>
<div class="b" style="left:84.70px;top:307.50px;width:0.80px;height:245.50px;background:#262c32;"></div>
<div class="b" style="left:90.40px;top:326.00px;width:0.80px;height:227.00px;background:#262c32;"></div>
<div class="b" style="left:96.30px;top:344.50px;width:0.80px;height:208.50px;background:#262c32;"></div>
<div class="b" style="left:102.10px;top:381.50px;width:0.80px;height:37.00px;background:#262c32;"></div>
<div class="b" style="left:102.10px;top:437.50px;width:0.80px;height:115.50px;background:#262c32;"></div>
<div class="b" style="left:107.90px;top:400.00px;width:0.80px;height:18.50px;background:#262c32;"></div>
<div class="b" style="left:107.90px;top:456.00px;width:0.80px;height:36.50px;background:#262c32;"></div>
<div class="b" style="left:107.90px;top:511.50px;width:0.80px;height:36.50px;background:#262c32;"></div>
<svg class="s" style="left:75.80px;top:237.00px;" width="7" height="11.2" viewBox="0 0 12 20"><rect x="1.5" y="1.5" width="9" height="17" rx="2.2" stroke="#fff" stroke-width="2.9" fill="none"/><path d="M2 15.2 H10" stroke="#fff" stroke-width="2"/></svg>
<span class="t" style="left:90.00px;top:237.80px;font-size:8px;line-height:9.60px;color:#fff;font-weight:700;transform:scaleX(0.8458);">Home</span>
<svg class="s" style="left:113.40px;top:237.80px;" width="9.6" height="9.6" viewBox="0 0 22 22"><rect x="2" y="2.2" width="18" height="17.6" rx="3" stroke="#e58f6c" stroke-width="2.7" fill="none"/><path d="M2 8 H20 M2 14 H20" stroke="#e58f6c" stroke-width="2.5"/><path d="M14.5 5.1 H17 M14.5 11 H17 M14.5 16.9 H17" stroke="#e58f6c" stroke-width="1.5"/></svg>
<svg class="s" style="left:198.30px;top:236.70px;" width="11.8" height="11.8" viewBox="0 0 22 22"><path d="M12.5 3 H6 a3 3 0 0 0 -3 3 V16 a3 3 0 0 0 3 3 H16 a3 3 0 0 0 3 -3 V11.5" stroke="#f2f4f6" stroke-width="2.18" fill="none"/><rect x="6" y="6.2" width="3.6" height="3.6" rx=".8" stroke="#f2f4f6" stroke-width="1.72" fill="none"/><rect x="6" y="12.4" width="3.6" height="3.6" rx=".8" stroke="#f2f4f6" stroke-width="1.72" fill="none"/><path d="M17 1.5 V8.5 M13.5 5 H20.5" stroke="#f2f4f6" stroke-width="2.18"/></svg>
<svg class="s" style="left:217.50px;top:241.35px;" width="4.4" height="2.7" viewBox="0 0 10 6"><path d="M0 0 H10 L5 5.5 Z" fill="#f2f4f6"/></svg>
<svg class="s" style="left:81.05px;top:255.65px;" width="8.5" height="11" viewBox="0 0 16 20"><rect x="1" y="1" width="3" height="18" rx="1" stroke="#adb5bd" stroke-width="1.5" fill="none"/><rect x="12" y="1" width="3" height="18" rx="1" stroke="#adb5bd" stroke-width="1.5" fill="none"/><rect x="6" y="2.5" width="4" height="4" rx="1" stroke="#adb5bd" stroke-width="1.4" fill="none"/><rect x="6" y="8" width="4" height="4" rx="1" stroke="#adb5bd" stroke-width="1.4" fill="none"/><rect x="6" y="13.5" width="4" height="4" rx="1" stroke="#adb5bd" stroke-width="1.4" fill="none"/></svg>
<span class="t" style="left:95.50px;top:256.35px;font-size:8px;line-height:9.60px;color:#adb5bd;transform:scaleX(0.8742);-webkit-text-stroke:.3px #adb5bd;">Column</span>
<svg class="s" style="left:198.30px;top:255.25px;" width="11.8" height="11.8" viewBox="0 0 22 22"><path d="M12.5 3 H6 a3 3 0 0 0 -3 3 V16 a3 3 0 0 0 3 3 H16 a3 3 0 0 0 3 -3 V11.5" stroke="#a7afb7" stroke-width="2.18" fill="none"/><rect x="6" y="6.2" width="3.6" height="3.6" rx=".8" stroke="#a7afb7" stroke-width="1.72" fill="none"/><rect x="6" y="12.4" width="3.6" height="3.6" rx=".8" stroke="#a7afb7" stroke-width="1.72" fill="none"/><path d="M17 1.5 V8.5 M13.5 5 H20.5" stroke="#a7afb7" stroke-width="2.18"/></svg>
<svg class="s" style="left:217.50px;top:259.90px;" width="4.4" height="2.7" viewBox="0 0 10 6"><path d="M0 0 H10 L5 5.5 Z" fill="#a7afb7"/></svg>
<svg class="s" style="left:85.65px;top:275.46px;" width="10.5" height="8.5" viewBox="0 0 20.5 17"><path d="M0.3 1 H11.2 V4.3 H7.6 V16 H4 V4.3 H0.3 Z" fill="#adb5bd"/><path d="M10.6 5.6 H20.3 V8.7 H17.1 V16 H13.9 V8.7 H10.6 Z" fill="#adb5bd"/></svg>
<span class="t" style="left:101.20px;top:274.91px;font-size:8px;line-height:9.60px;color:#adb5bd;transform:scaleX(0.8588);-webkit-text-stroke:.3px #adb5bd;">Text</span>
<svg class="s" style="left:118.30px;top:274.71px;" width="10" height="10" viewBox="0 0 20 20"><circle cx="10" cy="10" r="9" fill="#eef1f3"/><path d="M3.5 12.5 C6 7 11 4.5 16.5 4 M5.5 16.5 C9 11 13.5 9.5 18 9.5" stroke="#14181b" stroke-width="1.9" fill="none"/></svg>
<svg class="s" style="left:86.60px;top:295.16px;" width="8.6" height="6.2" viewBox="0 0 19 14"><path d="M0 1.4 H19 M0 7 H19 M0 12.6 H19" stroke="#adb5bd" stroke-width="2.7"/></svg>
<span class="t" style="left:100.80px;top:293.46px;font-size:8px;line-height:9.60px;color:#adb5bd;transform:scaleX(0.8838);-webkit-text-stroke:.3px #adb5bd;">ListView</span>
<svg class="s" style="left:132.80px;top:293.16px;" width="7.4" height="10.2" viewBox="0 0 16 20"><rect x="1" y="1" width="3" height="18" rx="1" stroke="#e58f6c" stroke-width="1.5" fill="none"/><rect x="12" y="1" width="3" height="18" rx="1" stroke="#e58f6c" stroke-width="1.5" fill="none"/><rect x="6" y="2.5" width="4" height="4" rx="1" stroke="#e58f6c" stroke-width="1.4" fill="none"/><rect x="6" y="8" width="4" height="4" rx="1" stroke="#e58f6c" stroke-width="1.4" fill="none"/><rect x="6" y="13.5" width="4" height="4" rx="1" stroke="#e58f6c" stroke-width="1.4" fill="none"/></svg>
<svg class="s" style="left:198.30px;top:292.37px;" width="11.8" height="11.8" viewBox="0 0 22 22"><path d="M12.5 3 H6 a3 3 0 0 0 -3 3 V16 a3 3 0 0 0 3 3 H16 a3 3 0 0 0 3 -3 V11.5" stroke="#a7afb7" stroke-width="2.18" fill="none"/><rect x="6" y="6.2" width="3.6" height="3.6" rx=".8" stroke="#a7afb7" stroke-width="1.72" fill="none"/><rect x="6" y="12.4" width="3.6" height="3.6" rx=".8" stroke="#a7afb7" stroke-width="1.72" fill="none"/><path d="M17 1.5 V8.5 M13.5 5 H20.5" stroke="#a7afb7" stroke-width="2.18"/></svg>
<svg class="s" style="left:217.50px;top:297.01px;" width="4.4" height="2.7" viewBox="0 0 10 6"><path d="M0 0 H10 L5 5.5 Z" fill="#a7afb7"/></svg>
<svg class="s" style="left:91.25px;top:311.57px;" width="10.5" height="10.5" viewBox="0 0 20 20"><rect x="1.2" y="1.2" width="17.6" height="17.6" rx="2.2" stroke="#adb5bd" stroke-width="1.9" fill="none"/></svg>
<span class="t" style="left:106.30px;top:312.02px;font-size:8px;line-height:9.60px;color:#adb5bd;transform:scaleX(0.8850);-webkit-text-stroke:.3px #adb5bd;">Container</span>
<svg class="s" style="left:141.70px;top:312.02px;" width="9.6" height="9.6" viewBox="0 0 22 22"><rect x="2" y="2.2" width="18" height="17.6" rx="3" stroke="#e58f6c" stroke-width="2.7" fill="none"/><path d="M2 8 H20 M2 14 H20" stroke="#e58f6c" stroke-width="2.5"/><path d="M14.5 5.1 H17 M14.5 11 H17 M14.5 16.9 H17" stroke="#e58f6c" stroke-width="1.5"/></svg>
<svg class="s" style="left:198.30px;top:310.92px;" width="11.8" height="11.8" viewBox="0 0 22 22"><path d="M12.5 3 H6 a3 3 0 0 0 -3 3 V16 a3 3 0 0 0 3 3 H16 a3 3 0 0 0 3 -3 V11.5" stroke="#a7afb7" stroke-width="2.18" fill="none"/><rect x="6" y="6.2" width="3.6" height="3.6" rx=".8" stroke="#a7afb7" stroke-width="1.72" fill="none"/><rect x="6" y="12.4" width="3.6" height="3.6" rx=".8" stroke="#a7afb7" stroke-width="1.72" fill="none"/><path d="M17 1.5 V8.5 M13.5 5 H20.5" stroke="#a7afb7" stroke-width="2.18"/></svg>
<svg class="s" style="left:217.50px;top:315.57px;" width="4.4" height="2.7" viewBox="0 0 10 6"><path d="M0 0 H10 L5 5.5 Z" fill="#a7afb7"/></svg>
<svg class="s" style="left:97.65px;top:329.88px;" width="8.5" height="11" viewBox="0 0 16 20"><rect x="1" y="1" width="3" height="18" rx="1" stroke="#adb5bd" stroke-width="1.5" fill="none"/><rect x="12" y="1" width="3" height="18" rx="1" stroke="#adb5bd" stroke-width="1.5" fill="none"/><rect x="6" y="2.5" width="4" height="4" rx="1" stroke="#adb5bd" stroke-width="1.4" fill="none"/><rect x="6" y="8" width="4" height="4" rx="1" stroke="#adb5bd" stroke-width="1.4" fill="none"/><rect x="6" y="13.5" width="4" height="4" rx="1" stroke="#adb5bd" stroke-width="1.4" fill="none"/></svg>
<span class="t" style="left:112.00px;top:330.57px;font-size:8px;line-height:9.60px;color:#adb5bd;transform:scaleX(0.8815);-webkit-text-stroke:.3px #adb5bd;">Column</span>
<svg class="s" style="left:198.30px;top:329.48px;" width="11.8" height="11.8" viewBox="0 0 22 22"><path d="M12.5 3 H6 a3 3 0 0 0 -3 3 V16 a3 3 0 0 0 3 3 H16 a3 3 0 0 0 3 -3 V11.5" stroke="#a7afb7" stroke-width="2.18" fill="none"/><rect x="6" y="6.2" width="3.6" height="3.6" rx=".8" stroke="#a7afb7" stroke-width="1.72" fill="none"/><rect x="6" y="12.4" width="3.6" height="3.6" rx=".8" stroke="#a7afb7" stroke-width="1.72" fill="none"/><path d="M17 1.5 V8.5 M13.5 5 H20.5" stroke="#a7afb7" stroke-width="2.18"/></svg>
<svg class="s" style="left:217.50px;top:334.12px;" width="4.4" height="2.7" viewBox="0 0 10 6"><path d="M0 0 H10 L5 5.5 Z" fill="#a7afb7"/></svg>
<svg class="s" style="left:102.55px;top:349.68px;" width="10.5" height="8.5" viewBox="0 0 20.5 17"><path d="M0.3 1 H11.2 V4.3 H7.6 V16 H4 V4.3 H0.3 Z" fill="#adb5bd"/><path d="M10.6 5.6 H20.3 V8.7 H17.1 V16 H13.9 V8.7 H10.6 Z" fill="#adb5bd"/></svg>
<span class="t" style="left:117.50px;top:349.13px;font-size:8px;line-height:9.60px;color:#adb5bd;transform:scaleX(0.8860);-webkit-text-stroke:.3px #adb5bd;">Text</span>
<svg class="s" style="left:102.80px;top:368.49px;" width="10" height="8" viewBox="0 0 22 16"><path d="M0.5 1.2 H21.5 M0.5 14.8 H21.5" stroke="#adb5bd" stroke-width="1.7"/><rect x="1.6" y="5.6" width="4.6" height="4.8" rx="1.6" stroke="#adb5bd" stroke-width="1.25" fill="none"/><rect x="8.7" y="5.6" width="4.6" height="4.8" rx="1.6" stroke="#adb5bd" stroke-width="1.25" fill="none"/><rect x="15.8" y="5.6" width="4.6" height="4.8" rx="1.6" stroke="#adb5bd" stroke-width="1.25" fill="none"/></svg>
<span class="t" style="left:117.50px;top:367.69px;font-size:8px;line-height:9.60px;color:#adb5bd;transform:scaleX(0.8310);-webkit-text-stroke:.3px #adb5bd;">Row</span>
<svg class="s" style="left:198.30px;top:366.59px;" width="11.8" height="11.8" viewBox="0 0 22 22"><path d="M12.5 3 H6 a3 3 0 0 0 -3 3 V16 a3 3 0 0 0 3 3 H16 a3 3 0 0 0 3 -3 V11.5" stroke="#a7afb7" stroke-width="2.18" fill="none"/><rect x="6" y="6.2" width="3.6" height="3.6" rx=".8" stroke="#a7afb7" stroke-width="1.72" fill="none"/><rect x="6" y="12.4" width="3.6" height="3.6" rx=".8" stroke="#a7afb7" stroke-width="1.72" fill="none"/><path d="M17 1.5 V8.5 M13.5 5 H20.5" stroke="#a7afb7" stroke-width="2.18"/></svg>
<svg class="s" style="left:217.50px;top:371.24px;" width="4.4" height="2.7" viewBox="0 0 10 6"><path d="M0 0 H10 L5 5.5 Z" fill="#a7afb7"/></svg>
<svg class="s" style="left:108.80px;top:387.74px;" width="9.2" height="6.6" viewBox="0 0 22 16"><rect x="1" y="1" width="10" height="6" rx="1" stroke="#adb5bd" stroke-width="1.5" fill="none"/><rect x="14" y="1" width="7" height="6" rx="1" stroke="#adb5bd" stroke-width="1.5" fill="none"/><rect x="1" y="10" width="6" height="5" rx="1" stroke="#adb5bd" stroke-width="1.5" fill="none"/><path d="M10 12.5 H21" stroke="#adb5bd" stroke-width="1.6"/></svg>
<span class="t" style="left:123.00px;top:386.24px;font-size:8px;line-height:9.60px;color:#adb5bd;transform:scaleX(0.8698);-webkit-text-stroke:.3px #adb5bd;">Wrap</span>
<svg class="s" style="left:198.30px;top:385.14px;" width="11.8" height="11.8" viewBox="0 0 22 22"><path d="M12.5 3 H6 a3 3 0 0 0 -3 3 V16 a3 3 0 0 0 3 3 H16 a3 3 0 0 0 3 -3 V11.5" stroke="#a7afb7" stroke-width="2.18" fill="none"/><rect x="6" y="6.2" width="3.6" height="3.6" rx=".8" stroke="#a7afb7" stroke-width="1.72" fill="none"/><rect x="6" y="12.4" width="3.6" height="3.6" rx=".8" stroke="#a7afb7" stroke-width="1.72" fill="none"/><path d="M17 1.5 V8.5 M13.5 5 H20.5" stroke="#a7afb7" stroke-width="2.18"/></svg>
<svg class="s" style="left:217.50px;top:389.79px;" width="4.4" height="2.7" viewBox="0 0 10 6"><path d="M0 0 H10 L5 5.5 Z" fill="#a7afb7"/></svg>
<svg class="s" style="left:114.35px;top:404.95px;" width="9.3" height="9.3" viewBox="0 0 22 21.5"><path d="M6 1.5 H16 L20.8 7.6 L11 20 L1.2 7.6 Z" stroke="#4a41e8" stroke-width="2.1" fill="#4a41e8" fill-opacity=".35" stroke-linejoin="round"/><path d="M1.2 7.6 H20.8 M7.6 7.6 L11 19.5 L14.4 7.6 M6 1.5 L7.6 7.6 L11 1.5 L14.4 7.6 L16 1.5" stroke="#4a41e8" stroke-width="1.6800000000000002" fill="none" stroke-linejoin="round"/></svg>
<span class="t" style="left:128.30px;top:404.80px;font-size:8px;line-height:9.60px;color:#4a41e8;font-weight:700;transform:scaleX(0.8307);">hintTag</span>
<svg class="s" style="left:102.80px;top:424.15px;" width="10" height="8" viewBox="0 0 22 16"><path d="M0.5 1.2 H21.5 M0.5 14.8 H21.5" stroke="#adb5bd" stroke-width="1.7"/><rect x="1.6" y="5.6" width="4.6" height="4.8" rx="1.6" stroke="#adb5bd" stroke-width="1.25" fill="none"/><rect x="8.7" y="5.6" width="4.6" height="4.8" rx="1.6" stroke="#adb5bd" stroke-width="1.25" fill="none"/><rect x="15.8" y="5.6" width="4.6" height="4.8" rx="1.6" stroke="#adb5bd" stroke-width="1.25" fill="none"/></svg>
<span class="t" style="left:117.50px;top:423.35px;font-size:8px;line-height:9.60px;color:#adb5bd;transform:scaleX(0.8310);-webkit-text-stroke:.3px #adb5bd;">Row</span>
<svg class="s" style="left:198.30px;top:422.25px;" width="11.8" height="11.8" viewBox="0 0 22 22"><path d="M12.5 3 H6 a3 3 0 0 0 -3 3 V16 a3 3 0 0 0 3 3 H16 a3 3 0 0 0 3 -3 V11.5" stroke="#a7afb7" stroke-width="2.18" fill="none"/><rect x="6" y="6.2" width="3.6" height="3.6" rx=".8" stroke="#a7afb7" stroke-width="1.72" fill="none"/><rect x="6" y="12.4" width="3.6" height="3.6" rx=".8" stroke="#a7afb7" stroke-width="1.72" fill="none"/><path d="M17 1.5 V8.5 M13.5 5 H20.5" stroke="#a7afb7" stroke-width="2.18"/></svg>
<svg class="s" style="left:217.50px;top:426.90px;" width="4.4" height="2.7" viewBox="0 0 10 6"><path d="M0 0 H10 L5 5.5 Z" fill="#a7afb7"/></svg>
<svg class="s" style="left:108.40px;top:442.70px;" width="10" height="8" viewBox="0 0 22 16"><path d="M0.5 1.2 H21.5 M0.5 14.8 H21.5" stroke="#adb5bd" stroke-width="1.7"/><rect x="1.6" y="5.6" width="4.6" height="4.8" rx="1.6" stroke="#adb5bd" stroke-width="1.25" fill="none"/><rect x="8.7" y="5.6" width="4.6" height="4.8" rx="1.6" stroke="#adb5bd" stroke-width="1.25" fill="none"/><rect x="15.8" y="5.6" width="4.6" height="4.8" rx="1.6" stroke="#adb5bd" stroke-width="1.25" fill="none"/></svg>
<span class="t" style="left:123.00px;top:441.90px;font-size:8px;line-height:9.60px;color:#adb5bd;transform:scaleX(0.8310);-webkit-text-stroke:.3px #adb5bd;">Row</span>
<svg class="s" style="left:198.30px;top:440.81px;" width="11.8" height="11.8" viewBox="0 0 22 22"><path d="M12.5 3 H6 a3 3 0 0 0 -3 3 V16 a3 3 0 0 0 3 3 H16 a3 3 0 0 0 3 -3 V11.5" stroke="#a7afb7" stroke-width="2.18" fill="none"/><rect x="6" y="6.2" width="3.6" height="3.6" rx=".8" stroke="#a7afb7" stroke-width="1.72" fill="none"/><rect x="6" y="12.4" width="3.6" height="3.6" rx=".8" stroke="#a7afb7" stroke-width="1.72" fill="none"/><path d="M17 1.5 V8.5 M13.5 5 H20.5" stroke="#a7afb7" stroke-width="2.18"/></svg>
<svg class="s" style="left:217.50px;top:445.45px;" width="4.4" height="2.7" viewBox="0 0 10 6"><path d="M0 0 H10 L5 5.5 Z" fill="#a7afb7"/></svg>
<svg class="s" style="left:114.00px;top:459.76px;" width="10" height="11" viewBox="0 0 20 20"><path d="M10 1.2 L17.8 5.6 V14.4 L10 18.8 L2.2 14.4 V5.6 Z" stroke="#adb5bd" stroke-width="1.7" fill="none" stroke-linejoin="round"/><path d="M10 6.2 L13.3 8.1 V11.9 L10 13.8 L6.7 11.9 V8.1 Z" stroke="#adb5bd" stroke-width="1.4" fill="none"/></svg>
<span class="t" style="left:128.90px;top:460.46px;font-size:8px;line-height:9.60px;color:#adb5bd;transform:scaleX(0.8597);-webkit-text-stroke:.3px #adb5bd;">Icon</span>
<svg class="s" style="left:113.95px;top:479.56px;" width="10.5" height="8.5" viewBox="0 0 20.5 17"><path d="M0.3 1 H11.2 V4.3 H7.6 V16 H4 V4.3 H0.3 Z" fill="#adb5bd"/><path d="M10.6 5.6 H20.3 V8.7 H17.1 V16 H13.9 V8.7 H10.6 Z" fill="#adb5bd"/></svg>
<span class="t" style="left:128.90px;top:479.01px;font-size:8px;line-height:9.60px;color:#adb5bd;transform:scaleX(0.8860);-webkit-text-stroke:.3px #adb5bd;">Text</span>
<svg class="s" style="left:108.40px;top:498.37px;" width="10" height="8" viewBox="0 0 22 16"><path d="M0.5 1.2 H21.5 M0.5 14.8 H21.5" stroke="#adb5bd" stroke-width="1.7"/><rect x="1.6" y="5.6" width="4.6" height="4.8" rx="1.6" stroke="#adb5bd" stroke-width="1.25" fill="none"/><rect x="8.7" y="5.6" width="4.6" height="4.8" rx="1.6" stroke="#adb5bd" stroke-width="1.25" fill="none"/><rect x="15.8" y="5.6" width="4.6" height="4.8" rx="1.6" stroke="#adb5bd" stroke-width="1.25" fill="none"/></svg>
<span class="t" style="left:123.00px;top:497.57px;font-size:8px;line-height:9.60px;color:#adb5bd;transform:scaleX(0.8310);-webkit-text-stroke:.3px #adb5bd;">Row</span>
<svg class="s" style="left:198.30px;top:496.47px;" width="11.8" height="11.8" viewBox="0 0 22 22"><path d="M12.5 3 H6 a3 3 0 0 0 -3 3 V16 a3 3 0 0 0 3 3 H16 a3 3 0 0 0 3 -3 V11.5" stroke="#a7afb7" stroke-width="2.18" fill="none"/><rect x="6" y="6.2" width="3.6" height="3.6" rx=".8" stroke="#a7afb7" stroke-width="1.72" fill="none"/><rect x="6" y="12.4" width="3.6" height="3.6" rx=".8" stroke="#a7afb7" stroke-width="1.72" fill="none"/><path d="M17 1.5 V8.5 M13.5 5 H20.5" stroke="#a7afb7" stroke-width="2.18"/></svg>
<svg class="s" style="left:217.50px;top:501.12px;" width="4.4" height="2.7" viewBox="0 0 10 6"><path d="M0 0 H10 L5 5.5 Z" fill="#a7afb7"/></svg>
<svg class="s" style="left:114.00px;top:515.42px;" width="10" height="11" viewBox="0 0 20 20"><path d="M10 1.2 L17.8 5.6 V14.4 L10 18.8 L2.2 14.4 V5.6 Z" stroke="#adb5bd" stroke-width="1.7" fill="none" stroke-linejoin="round"/><path d="M10 6.2 L13.3 8.1 V11.9 L10 13.8 L6.7 11.9 V8.1 Z" stroke="#adb5bd" stroke-width="1.4" fill="none"/></svg>
<span class="t" style="left:128.90px;top:516.12px;font-size:8px;line-height:9.60px;color:#adb5bd;transform:scaleX(0.8597);-webkit-text-stroke:.3px #adb5bd;">Icon</span>
<svg class="s" style="left:113.95px;top:535.23px;" width="10.5" height="8.5" viewBox="0 0 20.5 17"><path d="M0.3 1 H11.2 V4.3 H7.6 V16 H4 V4.3 H0.3 Z" fill="#adb5bd"/><path d="M10.6 5.6 H20.3 V8.7 H17.1 V16 H13.9 V8.7 H10.6 Z" fill="#adb5bd"/></svg>
<span class="t" style="left:128.90px;top:534.68px;font-size:8px;line-height:9.60px;color:#adb5bd;transform:scaleX(0.8860);-webkit-text-stroke:.3px #adb5bd;">Text</span>
<div class="b" style="left:236.00px;top:133.00px;width:547.30px;height:420.00px;background:#1f252a;"></div>
<div class="b" style="left:240.40px;top:138.70px;width:20.60px;height:20.90px;background:#14181b;border-radius:5px;"></div>
<svg class="s" style="left:246.55px;top:144.70px;" width="8.5" height="9" viewBox="0 0 14 16"><path d="M2 1 V15" stroke="#c3cad0" stroke-width="2.4"/><path d="M11.5 3.5 L7 8 L11.5 12.5" stroke="#c3cad0" stroke-width="2.1" fill="none"/></svg>
<div class="b" style="left:266.20px;top:138.70px;width:59.80px;height:20.90px;background:#14181b;border-radius:5px;"></div>
<div class="b" style="left:270.60px;top:148.40px;width:6.40px;height:1.60px;background:#c3cad0;"></div>
<span class="t" style="left:286.30px;top:143.54px;font-size:9.6px;line-height:11.52px;color:#fff;font-weight:700;transform:scaleX(1.0045);">90%</span>
<svg class="s" style="left:314.50px;top:145.70px;" width="7" height="7" viewBox="0 0 10 10"><path d="M5 0 V10 M0 5 H10" stroke="#c3cad0" stroke-width="1.7"/></svg>
<div class="b" style="left:731.00px;top:138.70px;width:22.00px;height:20.90px;background:#14181b;border-radius:5px;"></div>
<svg class="s" style="left:736.20px;top:143.30px;" width="11.6" height="11.6" viewBox="0 0 20 20"><circle cx="10" cy="10" r="3.9" fill="#aab3bd"/><path d="M10 0.8 V4 M10 16 V19.2 M0.8 10 H4 M16 10 H19.2 M3.5 3.5 L5.7 5.7 M14.3 14.3 L16.5 16.5 M3.5 16.5 L5.7 14.3 M14.3 5.7 L16.5 3.5" stroke="#aab3bd" stroke-width="2.4"/></svg>
<div class="b" style="left:757.80px;top:138.70px;width:20.50px;height:20.90px;background:#14181b;border-radius:5px;"></div>
<svg class="s" style="left:762.30px;top:143.40px;" width="11.4" height="11.4" viewBox="0 0 20 20"><rect x="2" y="2" width="4" height="4" rx="1" stroke="#c3cad0" stroke-width="1.6" fill="none"/><rect x="14" y="2" width="4" height="4" rx="1" stroke="#c3cad0" stroke-width="1.6" fill="none"/><rect x="2" y="14" width="4" height="4" rx="1" stroke="#c3cad0" stroke-width="1.6" fill="none"/><path d="M6 4 H14 M4 6 V14 M16 6 V10" stroke="#c3cad0" stroke-width="1.6"/><circle cx="15" cy="15" r="3" fill="#c3cad0"/></svg>
<div class="b" style="left:622.50px;top:133.00px;width:17.50px;height:7.50px;background:#2b333a;border-radius:0 0 3.5px 3.5px;"></div>
<div class="b" style="left:622.50px;top:546.30px;width:17.50px;height:13.70px;background:#2b333a;border-radius:3.5px;"></div>
<svg class="s" style="left:627.05px;top:548.70px;" width="8.5" height="7" viewBox="0 0 14 11"><rect x="1.2" y="1.2" width="11.6" height="8.6" rx="1" stroke="#fff" stroke-width="2.4" fill="none"/></svg>
<div class="b" style="left:783.30px;top:133.00px;width:6.30px;height:420.00px;background:#363e47;"></div>
<div class="b" style="left:783.60px;top:170.00px;width:6.00px;height:359.30px;background:#0f1214;border-radius:3px;"></div>
<div class="b" style="left:410.90px;top:133.00px;width:204.00px;height:421.00px;background:#4a8a82;"></div>
<div class="b" style="left:411.60px;top:133.00px;width:202.60px;height:421.00px;background:#f1f4f8;"></div>
<div class="b" style="left:411.6px;top:133px;width:202.6px;height:44.2px;background:#928bef;box-shadow:0 1px 2.5px rgba(0,0,0,.35)"></div>
<span class="t" style="left:419.40px;top:155.52px;font-size:11.8px;line-height:14.16px;color:#fff;transform:scaleX(0.9363);-webkit-text-stroke:.3px #fff;">Quests</span>
<div class="b" style="left:419.30px;top:216.30px;width:187.00px;height:65.00px;background:#ffffff;border-radius:3.5px;"></div>
<span class="t" style="left:423.30px;top:220.84px;font-size:10.6px;line-height:12.72px;color:#343a40;transform:scaleX(1.0183);">[name]</span>
<div class="b" style="left:423.30px;top:240.20px;width:33.70px;height:17.00px;background:#c8efea;border:1px solid #ade3db;border-radius:4.5px;"></div>
<span class="t" style="left:428.00px;top:244.00px;font-size:8px;line-height:9.60px;color:#5f9f97;transform:scaleX(0.9641);">Driving</span>
<svg class="s" style="left:440.40px;top:264.90px;" width="7" height="12.8" viewBox="0 0 13 19.5"><path d="M10.2 5.4 C10.2 3.6 8.4 2.9 6.5 2.9 S2.8 3.9 2.8 6 S4.6 8.9 6.5 9.5 S10.4 10.8 10.4 13.2 S8.5 16.4 6.5 16.4 S2.5 15.4 2.5 13.6 M6.5 0.5 V19" stroke="#1c2126" stroke-width="1.55" fill="none"/></svg>
<span class="t" style="left:452.60px;top:266.30px;font-size:8px;line-height:9.60px;color:#8a949e;transform:scaleX(0.9805);">0-20</span>
<svg class="s" style="left:485.75px;top:265.85px;" width="10.5" height="10.5" viewBox="0 0 20 20"><circle cx="10" cy="10" r="8.6" stroke="#1c2126" stroke-width="1.4" fill="none"/><path d="M10 4.8 V10 L13.5 12.6" stroke="#1c2126" stroke-width="1.4" fill="none"/></svg>
<span class="t" style="left:501.30px;top:266.30px;font-size:8px;line-height:9.60px;color:#8a949e;transform:scaleX(0.9207);">Before Dark</span>
<svg class="s" style="left:556.50px;top:265.85px;" width="7" height="10.5" viewBox="0 0 14 20"><path d="M1.5 1 H12.5 V5 L8.6 10 L12.5 15 V19 H1.5 V15 L5.4 10 L1.5 5 Z" stroke="#1c2126" stroke-width="1.6" fill="none" stroke-linejoin="round"/></svg>
<span class="t" style="left:568.80px;top:266.30px;font-size:8px;line-height:9.60px;color:#8a949e;transform:scaleX(0.8756);">1-2 hrs</span>
<div class="b" style="left:419.30px;top:285.30px;width:187.00px;height:65.00px;background:#f9fafc;border-radius:3.5px;"></div>
<span class="t" style="left:423.30px;top:289.84px;font-size:10.6px;line-height:12.72px;color:#7e8287;transform:scaleX(1.0183);">[name]</span>
<div class="b" style="left:423.30px;top:309.20px;width:33.70px;height:17.00px;background:#e0f4f3;border:1px solid #d3eeeb;border-radius:4.5px;"></div>
<span class="t" style="left:428.00px;top:313.00px;font-size:8px;line-height:9.60px;color:#acccc9;transform:scaleX(0.9641);">Driving</span>
<svg class="s" style="left:440.40px;top:333.90px;" width="7" height="12.8" viewBox="0 0 13 19.5"><path d="M10.2 5.4 C10.2 3.6 8.4 2.9 6.5 2.9 S2.8 3.9 2.8 6 S4.6 8.9 6.5 9.5 S10.4 10.8 10.4 13.2 S8.5 16.4 6.5 16.4 S2.5 15.4 2.5 13.6 M6.5 0.5 V19" stroke="#74777b" stroke-width="1.55" fill="none"/></svg>
<span class="t" style="left:452.60px;top:335.30px;font-size:8px;line-height:9.60px;color:#c1c7cd;transform:scaleX(0.9805);">0-20</span>
<svg class="s" style="left:485.75px;top:334.85px;" width="10.5" height="10.5" viewBox="0 0 20 20"><circle cx="10" cy="10" r="8.6" stroke="#74777b" stroke-width="1.4" fill="none"/><path d="M10 4.8 V10 L13.5 12.6" stroke="#74777b" stroke-width="1.4" fill="none"/></svg>
<span class="t" style="left:501.30px;top:335.30px;font-size:8px;line-height:9.60px;color:#c1c7cd;transform:scaleX(0.9207);">Before Dark</span>
<svg class="s" style="left:556.50px;top:334.85px;" width="7" height="10.5" viewBox="0 0 14 20"><path d="M1.5 1 H12.5 V5 L8.6 10 L12.5 15 V19 H1.5 V15 L5.4 10 L1.5 5 Z" stroke="#74777b" stroke-width="1.6" fill="none" stroke-linejoin="round"/></svg>
<span class="t" style="left:568.80px;top:335.30px;font-size:8px;line-height:9.60px;color:#c1c7cd;transform:scaleX(0.8756);">1-2 hrs</span>
<div class="b" style="left:419.30px;top:354.80px;width:187.00px;height:65.00px;background:#f9fafc;border-radius:3.5px;"></div>
<span class="t" style="left:423.30px;top:359.34px;font-size:10.6px;line-height:12.72px;color:#7e8287;transform:scaleX(1.0183);">[name]</span>
<div class="b" style="left:423.30px;top:378.70px;width:33.70px;height:17.00px;background:#e0f4f3;border:1px solid #d3eeeb;border-radius:4.5px;"></div>
<span class="t" style="left:428.00px;top:382.50px;font-size:8px;line-height:9.60px;color:#acccc9;transform:scaleX(0.9641);">Driving</span>
<svg class="s" style="left:440.40px;top:403.40px;" width="7" height="12.8" viewBox="0 0 13 19.5"><path d="M10.2 5.4 C10.2 3.6 8.4 2.9 6.5 2.9 S2.8 3.9 2.8 6 S4.6 8.9 6.5 9.5 S10.4 10.8 10.4 13.2 S8.5 16.4 6.5 16.4 S2.5 15.4 2.5 13.6 M6.5 0.5 V19" stroke="#74777b" stroke-width="1.55" fill="none"/></svg>
<span class="t" style="left:452.60px;top:404.80px;font-size:8px;line-height:9.60px;color:#c1c7cd;transform:scaleX(0.9805);">0-20</span>
<svg class="s" style="left:485.75px;top:404.35px;" width="10.5" height="10.5" viewBox="0 0 20 20"><circle cx="10" cy="10" r="8.6" stroke="#74777b" stroke-width="1.4" fill="none"/><path d="M10 4.8 V10 L13.5 12.6" stroke="#74777b" stroke-width="1.4" fill="none"/></svg>
<span class="t" style="left:501.30px;top:404.80px;font-size:8px;line-height:9.60px;color:#c1c7cd;transform:scaleX(0.9207);">Before Dark</span>
<svg class="s" style="left:556.50px;top:404.35px;" width="7" height="10.5" viewBox="0 0 14 20"><path d="M1.5 1 H12.5 V5 L8.6 10 L12.5 15 V19 H1.5 V15 L5.4 10 L1.5 5 Z" stroke="#74777b" stroke-width="1.6" fill="none" stroke-linejoin="round"/></svg>
<span class="t" style="left:568.80px;top:404.80px;font-size:8px;line-height:9.60px;color:#c1c7cd;transform:scaleX(0.8756);">1-2 hrs</span>
<div class="b" style="left:419.30px;top:424.10px;width:187.00px;height:65.00px;background:#f9fafc;border-radius:3.5px;"></div>
<span class="t" style="left:423.30px;top:428.64px;font-size:10.6px;line-height:12.72px;color:#7e8287;transform:scaleX(1.0183);">[name]</span>
<div class="b" style="left:423.30px;top:448.00px;width:33.70px;height:17.00px;background:#e0f4f3;border:1px solid #d3eeeb;border-radius:4.5px;"></div>
<span class="t" style="left:428.00px;top:451.80px;font-size:8px;line-height:9.60px;color:#acccc9;transform:scaleX(0.9641);">Driving</span>
<svg class="s" style="left:440.40px;top:472.70px;" width="7" height="12.8" viewBox="0 0 13 19.5"><path d="M10.2 5.4 C10.2 3.6 8.4 2.9 6.5 2.9 S2.8 3.9 2.8 6 S4.6 8.9 6.5 9.5 S10.4 10.8 10.4 13.2 S8.5 16.4 6.5 16.4 S2.5 15.4 2.5 13.6 M6.5 0.5 V19" stroke="#74777b" stroke-width="1.55" fill="none"/></svg>
<span class="t" style="left:452.60px;top:474.10px;font-size:8px;line-height:9.60px;color:#c1c7cd;transform:scaleX(0.9805);">0-20</span>
<svg class="s" style="left:485.75px;top:473.65px;" width="10.5" height="10.5" viewBox="0 0 20 20"><circle cx="10" cy="10" r="8.6" stroke="#74777b" stroke-width="1.4" fill="none"/><path d="M10 4.8 V10 L13.5 12.6" stroke="#74777b" stroke-width="1.4" fill="none"/></svg>
<span class="t" style="left:501.30px;top:474.10px;font-size:8px;line-height:9.60px;color:#c1c7cd;transform:scaleX(0.9207);">Before Dark</span>
<svg class="s" style="left:556.50px;top:473.65px;" width="7" height="10.5" viewBox="0 0 14 20"><path d="M1.5 1 H12.5 V5 L8.6 10 L12.5 15 V19 H1.5 V15 L5.4 10 L1.5 5 Z" stroke="#74777b" stroke-width="1.6" fill="none" stroke-linejoin="round"/></svg>
<span class="t" style="left:568.80px;top:474.10px;font-size:8px;line-height:9.60px;color:#c1c7cd;transform:scaleX(0.8756);">1-2 hrs</span>
<div class="b" style="left:411.60px;top:533.30px;width:202.60px;height:0.80px;background:#e9ecf0;"></div>
<svg class="s" style="left:457.30px;top:543.85px;" width="9" height="9.5" viewBox="0 0 20 20"><path d="M2 9 L10 2 L18 9 M4 8 V18 H8 V13 H12 V18 H16 V8" stroke="#8178f2" stroke-width="2" fill="none" stroke-linejoin="round"/></svg>
<svg class="s" style="left:558.45px;top:543.05px;" width="10.5" height="10.5" viewBox="0 0 20 20"><circle cx="10" cy="10" r="8.5" stroke="#3d444b" stroke-width="1.7" fill="none"/><circle cx="7" cy="8" r="1.3" fill="#3d444b"/><circle cx="13" cy="8" r="1.3" fill="#3d444b"/><path d="M5.5 11.5 a4.6 4.6 0 0 0 9 0 Z" fill="#3d444b"/></svg>
<div class="b" style="left:789.60px;top:133.00px;width:174.10px;height:99.60px;background:#1d2428;"></div>
<div class="b" style="left:789.60px;top:232.60px;width:174.10px;height:321.40px;background:#14181b;"></div>
<span class="t" style="left:798.80px;top:140.24px;font-size:8.6px;line-height:10.32px;color:#aeb6be;font-weight:700;transform:scaleX(0.8954);">Page Parameters</span>
<svg class="s" style="left:866.60px;top:141.40px;" width="8.4" height="8.4" viewBox="0 0 20 20"><circle cx="10" cy="10" r="8.4" stroke="#aeb6be" stroke-width="1.9" fill="none"/><path d="M10 9 V14.5" stroke="#aeb6be" stroke-width="2"/><circle cx="10" cy="6" r="1.3" fill="#aeb6be"/></svg>
<svg class="s" style="left:945.50px;top:141.00px;" width="9" height="9" viewBox="0 0 10 10"><path d="M5 0 V10 M0 5 H10" stroke="#aeb6be" stroke-width="1.2"/></svg>
<div class="b" style="left:789.60px;top:157.20px;width:174.10px;height:0.80px;background:#2a3137;"></div>
<span class="t" style="left:798.80px;top:164.04px;font-size:8.6px;line-height:10.32px;color:#aeb6be;font-weight:700;transform:scaleX(0.8850);">Route Settings</span>
<svg class="s" style="left:857.80px;top:165.20px;" width="8.4" height="8.4" viewBox="0 0 20 20"><circle cx="10" cy="10" r="8.4" stroke="#aeb6be" stroke-width="1.9" fill="none"/><path d="M10 9 V14.5" stroke="#aeb6be" stroke-width="2"/><circle cx="10" cy="6" r="1.3" fill="#aeb6be"/></svg>
<svg class="s" style="left:945.75px;top:167.00px;" width="8.5" height="5" viewBox="0 0 12 7"><path d="M1 1 L6 6 L11 1" stroke="#c9cfd5" stroke-width="1.5" fill="none"/></svg>
<span class="t" style="left:798.80px;top:190.32px;font-size:7.8px;line-height:9.36px;color:#95a1ac;transform:scaleX(0.9051);-webkit-text-stroke:.2px #95a1ac;">Route:</span>
<span class="t" style="left:825.20px;top:188.70px;font-size:10.5px;line-height:12.60px;color:#e6e9ec;font-weight:700;">/</span>
<div class="b" style="left:834.30px;top:185.80px;width:120.70px;height:17.50px;border:1px solid #2f373e;border-radius:4.5px;"></div>
<span class="t" style="left:840.80px;top:190.00px;font-size:8px;line-height:9.60px;color:#fff;font-weight:700;transform:scaleX(0.8999);">home</span>
<div class="b" style="left:799.30px;top:213.00px;width:10.30px;height:10.20px;border:1px solid #3c454d;border-radius:1.8px;"></div>
<span class="t" style="left:813.80px;top:213.52px;font-size:7.8px;line-height:9.36px;color:#7d8892;font-weight:700;transform:scaleX(0.9260);">Requires Authentication</span>
<svg class="s" style="left:900.50px;top:215.00px;" width="6.6" height="6.6" viewBox="0 0 20 20"><circle cx="10" cy="10" r="8.4" stroke="#6f7a84" stroke-width="1.8" fill="none"/><path d="M10 9 V14.5" stroke="#6f7a84" stroke-width="2"/><circle cx="10" cy="6" r="1.3" fill="#6f7a84"/></svg>
<svg class="s" style="left:797.90px;top:238.40px;" width="6" height="9.2" viewBox="0 0 12 20"><rect x="1.4" y="1.4" width="9.2" height="17.2" rx="2.2" stroke="#fff" stroke-width="2.8" fill="#14181b"/><path d="M2 15.5 H10" stroke="#fff" stroke-width="2"/></svg>
<span class="t" style="left:809.30px;top:238.20px;font-size:8px;line-height:9.60px;color:#fff;font-weight:700;transform:scaleX(0.8777);">Scaffold</span>
<div class="b" style="left:797.00px;top:252.00px;width:112.50px;height:19.00px;background:#0e1113;border:1px solid #2a3137;border-radius:5px;"></div>
<span class="t" style="left:803.80px;top:256.66px;font-size:8.4px;line-height:10.08px;color:#fff;font-weight:700;transform:scaleX(0.9170);">Home</span>
<div class="b" style="left:914.50px;top:252.00px;width:18.50px;height:19.00px;background:#181c20;border:1px solid #2a3137;border-radius:5px;"></div>
<svg class="s" style="left:918.05px;top:255.75px;" width="11.5" height="11.5" viewBox="0 0 20 20"><rect x="6" y="6" width="12" height="12" rx="3" stroke="#dfe3e7" stroke-width="1.8" fill="none"/><path d="M14 3.5 H6 a3.5 3.5 0 0 0 -3.5 3.5 V14" stroke="#dfe3e7" stroke-width="1.8" fill="none"/><rect x="9.5" y="9.5" width="5" height="5" rx="1" stroke="#dfe3e7" stroke-width="1.5" fill="none"/></svg>
<div class="b" style="left:938.30px;top:252.00px;width:18.50px;height:19.00px;background:#181c20;border:1px solid #2a3137;border-radius:5px;"></div>
<svg class="s" style="left:943.28px;top:256.10px;" width="8.64" height="10.8" viewBox="0 0 17 20"><path d="M1 3.2 H5 L5.8 1 H11.2 L12 3.2 H16 V5.4 H1 Z M2.4 6.6 H14.6 L13.8 19 H3.2 Z" fill="#eef0f2"/><path d="M6.3 8.6 V16.6 M10.7 8.6 V16.6" stroke="#14181b" stroke-width="1.5"/></svg>
<div class="b" style="left:797.00px;top:277.50px;width:159.80px;height:23.00px;background:#0e1113;border:1px solid #2a3137;border-radius:4.5px;"></div>
<span class="t" style="left:805.80px;top:284.22px;font-size:8.3px;line-height:9.96px;color:#5f6a74;transform:scaleX(0.9427);-webkit-text-stroke:.25px #5f6a74;">Describe your page here...</span>
<div class="b" style="left:797.00px;top:307.00px;width:159.80px;height:20.60px;background:#1d2428;border-radius:5.5px;"></div>
<div class="b" style="left:862.00px;top:308.30px;width:29.80px;height:17.90px;background:#0e1113;border-radius:4.5px;"></div>
<svg class="s" style="left:806.40px;top:311.30px;" width="12.6" height="12.6" viewBox="0 0 20 20"><g transform="rotate(45 10 10)"><rect x="7.4" y="0.2" width="5.2" height="19.6" rx="1" stroke="#dfe3e7" stroke-width="1.5" fill="#1d2428"/><path d="M7.4 4 H10 M7.4 7.5 H9.4 M7.4 11 H10 M7.4 14.5 H9.4" stroke="#dfe3e7" stroke-width="1"/></g><g transform="rotate(-45 10 10)"><path d="M7.5 1.2 H12.5 V15 L10 19.6 L7.5 15 Z" stroke="#dfe3e7" stroke-width="1.5" fill="#1d2428" stroke-linejoin="round"/><path d="M7.5 4.5 H12.5" stroke="#dfe3e7" stroke-width="1.2"/></g></svg>
<svg class="s" style="left:838.30px;top:311.30px;" width="12.6" height="12.6" viewBox="0 0 21 21"><circle cx="4" cy="4" r="2.3" stroke="#dfe3e7" stroke-width="1.7" fill="none"/><circle cx="11.5" cy="18" r="2.2" fill="#dfe3e7"/><path d="M4 6.3 V10.5 a4.5 4.5 0 0 0 4.5 4.5 h1.2" stroke="#dfe3e7" stroke-width="1.8" fill="none"/><path d="M11.2 2.6 L19 7.4 L15.2 8.6 L13.6 12.6 Z" stroke="#dfe3e7" stroke-width="1.7" fill="none" stroke-linejoin="round"/></svg>
<svg class="s" style="left:870.40px;top:311.20px;" width="13" height="13" viewBox="0 0 22 22"><rect x="2.2" y="2.2" width="17.6" height="17.6" rx="2.6" stroke="#fff" stroke-width="2.5" fill="none"/><path d="M2 8 H20 M2 14 H20" stroke="#fff" stroke-width="2.3"/><path d="M14.6 5.1 H17.2 M14.6 11 H17.2 M14.6 16.9 H17.2" stroke="#fff" stroke-width="1.5"/></svg>
<svg class="s" style="left:906.20px;top:313.40px;" width="7.2" height="8.6" viewBox="0 0 12 14"><path d="M1 1 L11 7 L1 13 Z" fill="#bac2c9"/></svg>
<svg class="s" style="left:936.00px;top:311.40px;" width="10.6" height="12.6" viewBox="0 0 20 22"><rect x="1.6" y="1.6" width="16.8" height="18.8" rx="3.4" stroke="#aeb6be" stroke-width="2" fill="none"/><path d="M5.4 8.6 H8.8 L10.2 10.2 H14.6 V15.4 H5.4 Z" stroke="#aeb6be" stroke-width="1.6" fill="none" stroke-linejoin="round"/><path d="M5 5.2 H15" stroke="#aeb6be" stroke-width="1.3"/></svg>
<span class="t" style="left:796.80px;top:336.46px;font-size:7.9px;line-height:9.48px;color:#8a96a1;transform:scaleX(0.8767);-webkit-text-stroke:.15px #8a96a1;">Query Collection</span>
<span class="t" style="left:796.80px;top:347.40px;font-size:10px;line-height:12.00px;color:#fff;font-weight:700;transform:scaleX(0.9262);">Quests</span>
<span class="t" style="left:796.80px;top:361.02px;font-size:7.8px;line-height:9.36px;color:#8a96a1;transform:scaleX(0.8632);-webkit-text-stroke:.2px #8a96a1;">Filters:</span>
<span class="t" style="left:819.60px;top:361.02px;font-size:7.8px;line-height:9.36px;color:#ee8b60;font-weight:700;transform:scaleX(0.8227);">isPublished == true</span>
<div class="b" style="left:797.00px;top:374.20px;width:41.30px;height:18.60px;border:1px solid #2a3137;border-radius:5px;"></div>
<svg class="s" style="left:802.65px;top:377.85px;" width="11.5" height="11.5" viewBox="0 0 20 20"><path d="M4 13 L13 4 L16 7 L7 16 L3.3 16.8 Z" stroke="#fff" stroke-width="1.6" fill="none" stroke-linejoin="round"/><path d="M10 17.5 H17.5" stroke="#fff" stroke-width="1.6"/></svg>
<span class="t" style="left:817.50px;top:378.32px;font-size:8.8px;line-height:10.56px;color:#fff;font-weight:700;transform:scaleX(0.8303);">Edit</span>
<div class="b" style="left:843.00px;top:374.20px;width:18.80px;height:18.60px;border:1px solid #2a3137;border-radius:5px;"></div>
<svg class="s" style="left:847.73px;top:378.20px;" width="9.35" height="11" viewBox="0 0 17 20"><path d="M1.5 4.5 H15.5 M6 4 V2 H11 V4 M3 5 L3.8 18.5 H13.2 L14 5" stroke="#cf4631" stroke-width="1.7" fill="none" stroke-linejoin="round"/></svg>
<div class="b" style="left:915.00px;top:374.20px;width:18.80px;height:18.60px;border:1px solid #2a3137;border-radius:5px;"></div>
<svg class="s" style="left:918.90px;top:378.20px;" width="11" height="11" viewBox="0 0 20 20"><rect x="6" y="5" width="12" height="13" rx="3" stroke="#dfe3e7" stroke-width="1.8" fill="none"/><path d="M13 2.5 H6 a3.5 3.5 0 0 0 -3.5 3.5 V14.5" stroke="#dfe3e7" stroke-width="1.8" fill="none"/><path d="M9.5 8.5 L14.5 14.5 M14.5 8.5 L9.5 14.5" stroke="#dfe3e7" stroke-width="1.5"/></svg>
<div class="b" style="left:938.30px;top:374.20px;width:18.70px;height:18.60px;border:1px solid #2a3137;border-radius:5px;"></div>
<svg class="s" style="left:942.20px;top:378.20px;" width="11" height="11" viewBox="0 0 20 20"><rect x="6" y="5" width="12" height="13" rx="3" stroke="#dfe3e7" stroke-width="1.8" fill="none"/><path d="M13 2.5 H6 a3.5 3.5 0 0 0 -3.5 3.5 V14.5" stroke="#dfe3e7" stroke-width="1.8" fill="none"/><path d="M14.5 9.5 a3 3 0 1 0 0 4" stroke="#dfe3e7" stroke-width="1.6" fill="none"/></svg>
<div class="b" style="left:789.60px;top:399.60px;width:174.10px;height:0.80px;background:#23292e;"></div>
<span class="t" style="left:796.80px;top:407.92px;font-size:8.3px;line-height:9.96px;color:#fff;font-weight:700;transform:scaleX(0.8495);">Backend Query Loading Widget</span>
<svg class="s" style="left:905.80px;top:408.80px;" width="7.6" height="7.6" viewBox="0 0 20 20"><circle cx="10" cy="10" r="8.4" stroke="#8a96a1" stroke-width="1.7" fill="none"/><path d="M10 9 V14.5" stroke="#8a96a1" stroke-width="2"/><circle cx="10" cy="6" r="1.3" fill="#8a96a1"/></svg>
<svg class="s" style="left:948.70px;top:407.90px;" width="5.4" height="9" viewBox="0 0 7 14"><path d="M1 1 L6 7 L1 13" stroke="#c3cad0" stroke-width="1.6" fill="none"/></svg>
<span class="t" style="left:796.80px;top:430.02px;font-size:8.3px;line-height:9.96px;color:#fff;font-weight:700;transform:scaleX(0.8486);">Query Cache Settings</span>
<svg class="s" style="left:873.00px;top:430.90px;" width="7.6" height="7.6" viewBox="0 0 20 20"><circle cx="10" cy="10" r="8.4" stroke="#8a96a1" stroke-width="1.7" fill="none"/><path d="M10 9 V14.5" stroke="#8a96a1" stroke-width="2"/><circle cx="10" cy="6" r="1.3" fill="#8a96a1"/></svg>
<svg class="s" style="left:948.70px;top:430.00px;" width="5.4" height="9" viewBox="0 0 7 14"><path d="M1 1 L6 7 L1 13" stroke="#c3cad0" stroke-width="1.6" fill="none"/></svg>
<div class="b" style="left:923.7px;top:513.2px;width:28.6px;height:28.6px;border-radius:14.3px;background:#4a41e8;box-shadow:0 0 5px rgba(0,0,0,.35)"></div>
<svg class="s" style="left:930.05px;top:519.55px;" width="16.5" height="16.5" viewBox="0 0 19 19"><circle cx="8.2" cy="8" r="5.6" stroke="#fff" stroke-width="1.6" fill="none"/><path d="M12.4 12.2 L16.5 16.3" stroke="#fff" stroke-width="2.3" stroke-linecap="round"/><path d="M5.6 9 a3.2 3.2 0 0 0 5.2 0" stroke="#fff" stroke-width="1.2" fill="none"/></svg>
</div></div>
</body></html>
